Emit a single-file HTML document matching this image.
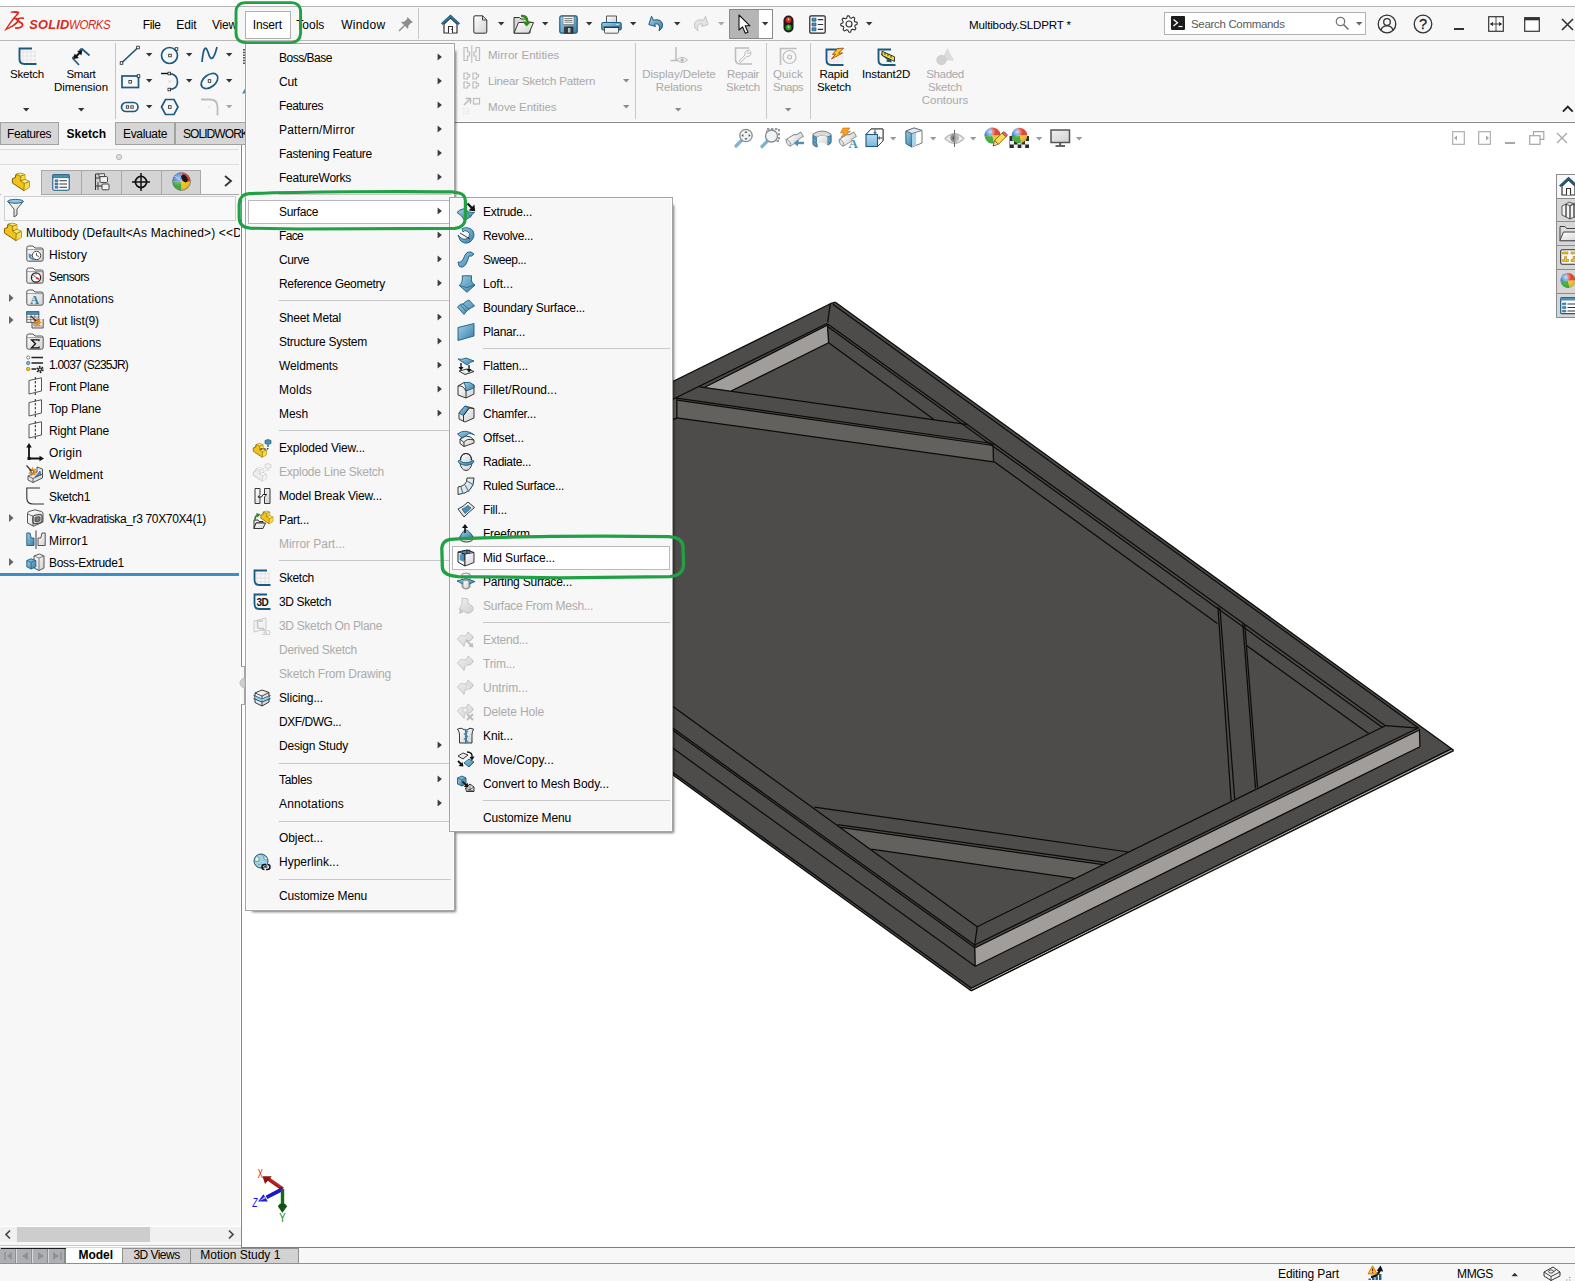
<!DOCTYPE html>
<html><head><meta charset="utf-8"><title>SOLIDWORKS - Multibody.SLDPRT</title>
<style>
html,body{margin:0;padding:0;background:#fff}
body{width:1575px;height:1281px;position:relative;overflow:hidden;font-family:"Liberation Sans",sans-serif;font-size:12px}
.b{position:absolute;display:block}
.t{position:absolute;white-space:nowrap;display:block}
svg{overflow:visible}
svg text{font-family:"Liberation Sans",sans-serif}
</style></head>
<body>
<div class="b" style="left:0px;top:0px;width:1575px;height:1281px;background:#fff;"></div>
<div class="b" style="left:0px;top:6px;width:1575px;height:1px;background:#b4b4b4;"></div>
<div class="b" style="left:0px;top:7px;width:1575px;height:33px;background:#f7f7f7;"></div>
<div class="b" style="left:0px;top:40px;width:1575px;height:1px;background:#b9b9b9;"></div>
<div class="b" style="left:0px;top:41px;width:1575px;height:81px;background:#f7f7f7;"></div>
<div class="b" style="left:0px;top:121px;width:1575px;height:1px;background:#fff;"></div>
<div class="b" style="left:0px;top:122px;width:1575px;height:1px;background:#878787;"></div>
<div class="b" style="left:245px;top:123px;width:1330px;height:1125px;background:#fff;"></div>
<div class="b" style="left:0px;top:1247px;width:1575px;height:1px;background:#7f7f7f;"></div>
<div class="b" style="left:0px;top:1248px;width:1575px;height:15px;background:#f7f7f7;"></div>
<div class="b" style="left:0px;top:1264px;width:1575px;height:17px;background:#f7f7f7;"></div>
<div class="b" style="left:0px;top:145px;width:240px;height:1102px;background:#f7f7f7;"></div>
<div class="b" style="left:240px;top:145px;width:1px;height:1102px;background:#fff;"></div>
<div class="b" style="left:241px;top:145px;width:1px;height:1102px;background:#858585;"></div>
<div class="b" style="left:242px;top:145px;width:3px;height:1102px;background:#fff;"></div>
<div class="b" style="left:241px;top:666px;width:4px;height:39px;background:#f7f7f7;"></div>
<div class="b" style="left:244px;top:666px;width:1px;height:39px;background:#a6a6a6;"></div>
<div class="b" style="left:241px;top:666px;width:4px;height:1px;background:#a6a6a6;"></div>
<div class="b" style="left:241px;top:704px;width:4px;height:1px;background:#a6a6a6;"></div>
<svg class="b" style="left:240px;top:677px;" width="6" height="12" viewBox="0 0 6 12"><path d="M5 1 A5 5 0 0 0 5 11 Z" fill="#cfcfcf" stroke="#aaa" stroke-width="0.6"/></svg>
<svg class="b" style="left:0px;top:0px;" width="30" height="40" viewBox="0 0 30 40"><path d="M10.8 11.4 Q16.5 10.4 19.6 12 Q18.6 15.2 15.2 17.6 Q19.6 18.6 19.4 20.8 Q17.5 25.5 4 30.9 Q9 23.5 12.8 18.2 Q16.4 14.8 16.9 13.3 Q14.5 12.3 10.8 12.8 Z" fill="#da291c"/><path d="M14 19.3 Q10.5 24 7.6 28 Q13.5 25.3 16.6 21.6 Q17.4 19.9 14 19.3 Z" fill="#f7f7f7"/><path d="M24 18.3 Q18.6 17.4 18 19.6 Q17.8 21.4 20.6 22.6 Q23.2 23.8 22.4 25.6 Q21 28.3 15 28" fill="none" stroke="#da291c" stroke-width="1.7"/></svg>
<span class="t" style="left:29.2px;top:16.9px;font-size:12.8px;line-height:16px;font-weight:bold;font-style:italic;color:#da291c;letter-spacing:0.25px;transform-origin:0 100%">SOLID</span>
<span class="t" style="left:68.8px;top:16.9px;font-size:12.8px;line-height:16px;font-style:italic;color:#da291c;letter-spacing:-0.5px;transform:scaleX(0.9);transform-origin:0 100%">WORKS</span>
<span class="t " style="left:142.70px;top:17.24px;font-size:12px;line-height:16px;letter-spacing:-0.334px;color:#000;">File</span>
<span class="t " style="left:176.30px;top:17.24px;font-size:12px;line-height:16px;letter-spacing:-0.169px;color:#000;">Edit</span>
<span class="t " style="left:212.00px;top:17.24px;font-size:12px;line-height:16px;letter-spacing:-0.198px;color:#000;">View</span>
<span class="t " style="left:252.80px;top:17.24px;font-size:12px;line-height:16px;letter-spacing:-0.169px;color:#000;">Insert</span>
<span class="t " style="left:296.30px;top:17.24px;font-size:12px;line-height:16px;letter-spacing:-0.003px;color:#000;">Tools</span>
<span class="t " style="left:341.30px;top:17.24px;font-size:12px;line-height:16px;letter-spacing:0.220px;color:#000;">Window</span>
<div class="b" style="left:418px;top:8px;width:1px;height:31px;background:#c8c8c8;"></div>
<div class="b" style="left:729px;top:9px;width:44px;height:30px;background:#fff;border:1px solid #8a8a8a;box-sizing:border-box;"></div>
<div class="b" style="left:730px;top:10px;width:29px;height:28px;background:#b5b5b5;"></div>
<div class="b" style="left:245px;top:11px;width:46px;height:28px;background:#fff;border:1px solid #b0b0b0;box-sizing:border-box;"></div>
<span class="t " style="left:252.80px;top:17.24px;font-size:12px;line-height:16px;letter-spacing:-0.169px;color:#000;">Insert</span>
<span class="t " style="left:969.00px;top:17.48px;font-size:11.6px;line-height:15.6px;letter-spacing:-0.172px;color:#000;">Multibody.SLDPRT *</span>
<div class="b" style="left:1164px;top:12px;width:202px;height:23px;background:#fff;border:1px solid #b2b2b2;box-sizing:border-box;"></div>
<span class="t " style="left:1191.00px;top:17.47px;font-size:11.5px;line-height:15.5px;letter-spacing:-0.322px;color:#5a5a5a;">Search Commands</span>
<svg class="b" style="left:398px;top:16px;" width="16" height="16" viewBox="0 0 16 16"><path d="M9.5 1 L15 6.5 L13 7 L10.5 9.5 L10 13 L3 6 L6.5 5.5 L9 3 Z" fill="#8d8d8d"/><path d="M6.5 9.5 L1 15" stroke="#8d8d8d" stroke-width="1.4"/></svg>
<svg class="b" style="left:441px;top:15.2px;" width="19" height="19" viewBox="0 0 19 19"><path d="M3 9 V18 H16 V9 L9.5 3 Z" fill="#fff" stroke="#333" stroke-width="1.2"/><path d="M7.5 18 V11.5 H11.5 V18" fill="#fff" stroke="#333" stroke-width="1.1"/><path d="M10.3 14.5 h0.9" stroke="#333" stroke-width="1"/><path d="M0.8 9.2 L9.5 1.2 L18.2 9.2" fill="none" stroke="#1b5a80" stroke-width="2.4" stroke-linejoin="miter"/><path d="M1.5 8.6 L9.5 1.4 L17.5 8.6" fill="none" stroke="#4a8fb6" stroke-width="0.8"/></svg>
<svg class="b" style="left:473px;top:14.6px;" width="15" height="19" viewBox="0 0 15 19"><path d="M2 0.8 H9.5 L13.8 5 V17 Q13.8 18.2 12.5 18.2 H2 Q0.8 18.2 0.8 17 V2 Q0.8 0.8 2 0.8 Z" fill="url(#gw)" stroke="#333" stroke-width="1" stroke-linejoin="round"/><path d="M9.5 0.8 V5 H13.8" fill="none" stroke="#333" stroke-width="0.9"/></svg>
<svg class="b" style="left:498.3px;top:21.900000000000002px;" width="6.4" height="3.6" viewBox="0 0 6.4 3.6"><path d="M0 0 H6.4 L3.2 3.5 Z" fill="#333"/></svg>
<svg class="b" style="left:513px;top:14.6px;" width="22" height="19" viewBox="0 0 22 19"><path d="M1 2.5 H6.5 L8 4 H14.5 V7 H17 V18 H1 Z" fill="#d8d8d8" stroke="#333" stroke-width="1"/><path d="M5.5 7.5 H20.5 L16 18.2 H1 Z" fill="url(#gw)" stroke="#333" stroke-width="1" stroke-linejoin="round"/><path d="M8 1 Q14 0.5 14.2 6" fill="none" stroke="#2e8a12" stroke-width="2.6"/><path d="M9.5 6.5 H18.5 L13.5 11.5 Z" fill="#2e8a12"/></svg>
<svg class="b" style="left:542.3px;top:21.900000000000002px;" width="6.4" height="3.6" viewBox="0 0 6.4 3.6"><path d="M0 0 H6.4 L3.2 3.5 Z" fill="#333"/></svg>
<svg class="b" style="left:559px;top:14.6px;" width="19" height="19" viewBox="0 0 19 19"><rect x="0.8" y="0.8" width="17.4" height="17.4" rx="1.8" fill="url(#gb)" stroke="#1b5a80" stroke-width="1.2"/><rect x="4" y="1.5" width="11" height="8" fill="#f4f4f4" stroke="#666" stroke-width="0.6"/><path d="M5.5 3.6 H13.5 M5.5 5.4 H13.5 M5.5 7.2 H13.5" stroke="#666" stroke-width="0.8"/><rect x="5.5" y="12" width="8.5" height="6.2" fill="#3a3a3a" stroke="#222" stroke-width="0.6"/><rect x="9" y="13" width="2.4" height="4.5" fill="#bdbdbd"/></svg>
<svg class="b" style="left:586.3px;top:21.900000000000002px;" width="6.4" height="3.6" viewBox="0 0 6.4 3.6"><path d="M0 0 H6.4 L3.2 3.5 Z" fill="#333"/></svg>
<svg class="b" style="left:601px;top:14.6px;" width="21" height="19" viewBox="0 0 21 19"><path d="M5.5 8 V1 H15.5 V8" fill="url(#gw)" stroke="#444" stroke-width="0.9"/><rect x="0.8" y="7.5" width="19.4" height="7.5" rx="1.5" fill="url(#gb)" stroke="#1b5a80" stroke-width="1.1"/><path d="M3.5 12.5 H17.5 V17 Q17.5 18.2 16.5 18.2 H4.5 Q3.5 18.2 3.5 17 Z" fill="#f4f4f4" stroke="#444" stroke-width="0.9"/><path d="M2.5 12.2 H18.5" stroke="#123f5c" stroke-width="1.4"/><path d="M15.5 9.5 h2" stroke="#dff" stroke-width="1"/></svg>
<svg class="b" style="left:630.3px;top:21.900000000000002px;" width="6.4" height="3.6" viewBox="0 0 6.4 3.6"><path d="M0 0 H6.4 L3.2 3.5 Z" fill="#333"/></svg>
<svg class="b" style="left:648px;top:15px;" width="17" height="17" viewBox="0 0 17 17"><path d="M5.5 5.2 Q13 3.5 14.5 9 Q15.3 13 11 16 Q12.3 12.5 11 10.3 Q9.5 8 6.5 9 L7.5 11.5 L0.8 9.5 L3.5 1.2 Z" fill="url(#gb)" stroke="#1b5a80" stroke-width="1" stroke-linejoin="round"/></svg>
<svg class="b" style="left:674.3px;top:21.900000000000002px;" width="6.4" height="3.6" viewBox="0 0 6.4 3.6"><path d="M0 0 H6.4 L3.2 3.5 Z" fill="#333"/></svg>
<svg class="b" style="left:692px;top:15px;" width="17" height="17" viewBox="0 0 17 17"><path d="M11.5 5.2 Q4 3.5 2.5 9 Q1.7 13 6 16 Q4.7 12.5 6 10.3 Q7.5 8 10.5 9 L9.5 11.5 L16.2 9.5 L13.5 1.2 Z" fill="#e4e4e4" stroke="#c6c6c6" stroke-width="1" stroke-linejoin="round"/></svg>
<svg class="b" style="left:717.8px;top:21.900000000000002px;" width="6.4" height="3.6" viewBox="0 0 6.4 3.6"><path d="M0 0 H6.4 L3.2 3.5 Z" fill="#a8a8a8"/></svg>
<svg class="b" style="left:738px;top:14px;" width="14" height="21" viewBox="0 0 14 21"><path d="M1 1 V16 L4.5 12.8 L7.3 19.3 L10 18.2 L7.2 11.8 H12 Z" fill="#fff" stroke="#111" stroke-width="1.1" stroke-linejoin="round"/></svg>
<svg class="b" style="left:762.3px;top:21.900000000000002px;" width="6.4" height="3.6" viewBox="0 0 6.4 3.6"><path d="M0 0 H6.4 L3.2 3.5 Z" fill="#333"/></svg>
<svg class="b" style="left:783px;top:15px;" width="11" height="18" viewBox="0 0 11 18"><rect x="0.5" y="0.5" width="10" height="17" rx="5" fill="#1c1c1c"/><circle cx="5.5" cy="5" r="3" fill="#d8261c"/><circle cx="5.5" cy="12.6" r="3" fill="#2c9a23"/><path d="M5.5 3 V5.6 M4.4 4.2 H6.6" stroke="#f8b0a8" stroke-width="0.9"/><path d="M5.5 10.6 V13.2 M4.4 11.8 H6.6" stroke="#a8e89f" stroke-width="0.9"/></svg>
<svg class="b" style="left:809px;top:14.6px;" width="18" height="19" viewBox="0 0 18 19"><rect x="0.8" y="0.8" width="15.4" height="17.4" rx="1.2" fill="#fbfbfb" stroke="#222" stroke-width="1.2"/><path d="M3 3.2 h4 v3 h-4z M3 8 h4 v3 h-4z M3 12.8 h4 v3 h-4z" fill="#4a8fb6" stroke="#1b5a80" stroke-width="0.7"/><path d="M8.8 4.7 H14.2 M8.8 9.5 H14.2 M8.8 14.3 H14.2" stroke="#333" stroke-width="1.2"/></svg>
<svg class="b" style="left:839.5px;top:14.5px;" width="18" height="18" viewBox="0 0 18 18"><polygon points="17.14,7.38 17.30,9.00 15.08,10.21 14.73,11.37 15.90,13.61 14.87,14.87 12.44,14.16 11.37,14.73 10.62,17.14 9.00,17.30 7.79,15.08 6.63,14.73 4.39,15.90 3.13,14.87 3.84,12.44 3.27,11.37 0.86,10.62 0.70,9.00 2.92,7.79 3.27,6.63 2.10,4.39 3.13,3.13 5.56,3.84 6.63,3.27 7.38,0.86 9.00,0.70 10.21,2.92 11.37,3.27 13.61,2.10 14.87,3.13 14.16,5.56 14.73,6.63" fill="#fcfcfc" stroke="#333" stroke-width="1.1" stroke-linejoin="round"/><circle cx="9" cy="9" r="3" fill="#f7f7f7" stroke="#333" stroke-width="1.2"/></svg>
<svg class="b" style="left:865.8px;top:21.900000000000002px;" width="6.4" height="3.6" viewBox="0 0 6.4 3.6"><path d="M0 0 H6.4 L3.2 3.5 Z" fill="#333"/></svg>
<svg class="b" style="left:1171px;top:16px;" width="14" height="14" viewBox="0 0 14 14"><rect width="14" height="14" rx="1" fill="#1b1b1b"/><path d="M2.5 3.5 L6.5 6.8 L2.5 10" fill="none" stroke="#fff" stroke-width="1.3"/><path d="M7.5 10.5 H11.5" stroke="#fff" stroke-width="1.2"/></svg>
<svg class="b" style="left:1335px;top:16px;" width="15" height="15" viewBox="0 0 15 15"><circle cx="5.5" cy="5.5" r="4.2" fill="none" stroke="#777" stroke-width="1.3"/><path d="M8.6 8.6 L13.5 13.5" stroke="#777" stroke-width="1.7"/></svg>
<svg class="b" style="left:1355.8px;top:21.6px;" width="6.4" height="3.6" viewBox="0 0 6.4 3.6"><path d="M0 0 H6.4 L3.2 3.5 Z" fill="#666"/></svg>
<svg class="b" style="left:1377px;top:14px;" width="20" height="20" viewBox="0 0 20 20"><circle cx="10" cy="10" r="8.8" fill="none" stroke="#333" stroke-width="1.3"/><circle cx="10" cy="8" r="3.3" fill="none" stroke="#333" stroke-width="1.3"/><path d="M4 16.2 Q5 11.8 10 11.8 Q15 11.8 16 16.2" fill="none" stroke="#333" stroke-width="1.3"/></svg>
<svg class="b" style="left:1413px;top:14px;" width="20" height="20" viewBox="0 0 20 20"><circle cx="10" cy="10" r="8.8" fill="none" stroke="#333" stroke-width="1.3"/><text x="10" y="15" text-anchor="middle" font-size="14.5" fill="#222" stroke="#222" stroke-width="0.3">?</text></svg>
<div class="b" style="left:1454px;top:28px;width:10px;height:2px;background:#333;"></div>
<svg class="b" style="left:1488px;top:16px;" width="16" height="16" viewBox="0 0 16 16"><rect x="0.7" y="0.7" width="14.6" height="14.6" fill="#fdfdfd" stroke="#333" stroke-width="1.2"/><path d="M8 1 V15" stroke="#333" stroke-width="0.9"/><path d="M2.5 8 H13.5" stroke="#333" stroke-width="1"/><path d="M2 8 L5 5.8 V10.2 Z M14 8 L11 5.8 V10.2 Z" fill="#333"/></svg>
<svg class="b" style="left:1524px;top:17px;" width="16" height="15" viewBox="0 0 16 15"><rect x="0.7" y="0.7" width="14.6" height="13.6" fill="#fdfdfd" stroke="#333" stroke-width="1.2"/><rect x="0.7" y="0.7" width="14.6" height="2.6" fill="#333"/></svg>
<svg class="b" style="left:1561px;top:18px;" width="14" height="13" viewBox="0 0 14 13"><path d="M1 1 L12 12 M12 1 L1 12" stroke="#333" stroke-width="1.6"/></svg>
<div class="b" style="left:115px;top:43px;width:1px;height:76px;background:#c4c4c4;"></div>
<span class="t " style="left:10.11px;top:66.67px;font-size:11.5px;line-height:15.5px;letter-spacing:-0.230px;color:#000;">Sketch</span>
<span class="t " style="left:66.53px;top:66.67px;font-size:11.5px;line-height:15.5px;letter-spacing:-0.344px;color:#000;">Smart</span>
<span class="t " style="left:53.98px;top:79.67px;font-size:11.5px;line-height:15.5px;letter-spacing:-0.032px;color:#000;">Dimension</span>
<span class="t " style="left:488.00px;top:48.37px;font-size:11.5px;line-height:15.5px;letter-spacing:0.032px;color:#a9a9a9;">Mirror Entities</span>
<span class="t " style="left:488.00px;top:74.37px;font-size:11.5px;line-height:15.5px;letter-spacing:-0.166px;color:#a9a9a9;">Linear Sketch Pattern</span>
<span class="t " style="left:488.00px;top:100.37px;font-size:11.5px;line-height:15.5px;letter-spacing:-0.039px;color:#a9a9a9;">Move Entities</span>
<div class="b" style="left:635px;top:43px;width:1px;height:76px;background:#c8c8c8;"></div>
<span class="t " style="left:642.33px;top:66.67px;font-size:11.5px;line-height:15.5px;letter-spacing:-0.057px;color:#a9a9a9;">Display/Delete</span>
<span class="t " style="left:655.84px;top:79.67px;font-size:11.5px;line-height:15.5px;letter-spacing:-0.180px;color:#a9a9a9;">Relations</span>
<span class="t " style="left:727.08px;top:66.67px;font-size:11.5px;line-height:15.5px;letter-spacing:-0.339px;color:#a9a9a9;">Repair</span>
<span class="t " style="left:726.11px;top:79.67px;font-size:11.5px;line-height:15.5px;letter-spacing:-0.230px;color:#a9a9a9;">Sketch</span>
<div class="b" style="left:766px;top:43px;width:1px;height:76px;background:#c8c8c8;"></div>
<span class="t " style="left:773.04px;top:66.67px;font-size:11.5px;line-height:15.5px;letter-spacing:0.104px;color:#a9a9a9;">Quick</span>
<span class="t " style="left:773.04px;top:79.67px;font-size:11.5px;line-height:15.5px;letter-spacing:-0.539px;color:#a9a9a9;">Snaps</span>
<div class="b" style="left:810px;top:43px;width:1px;height:76px;background:#c8c8c8;"></div>
<span class="t " style="left:819.52px;top:66.67px;font-size:11.5px;line-height:15.5px;letter-spacing:-0.219px;color:#000;">Rapid</span>
<span class="t " style="left:817.11px;top:79.67px;font-size:11.5px;line-height:15.5px;letter-spacing:-0.230px;color:#000;">Sketch</span>
<span class="t " style="left:861.88px;top:66.67px;font-size:11.5px;line-height:15.5px;letter-spacing:-0.108px;color:#000;">Instant2D</span>
<span class="t " style="left:926.18px;top:66.67px;font-size:11.5px;line-height:15.5px;letter-spacing:-0.336px;color:#a9a9a9;">Shaded</span>
<span class="t " style="left:928.11px;top:79.67px;font-size:11.5px;line-height:15.5px;letter-spacing:-0.230px;color:#a9a9a9;">Sketch</span>
<span class="t " style="left:921.84px;top:92.67px;font-size:11.5px;line-height:15.5px;letter-spacing:-0.043px;color:#a9a9a9;">Contours</span>
<svg class="b" style="left:18px;top:47px;" width="19" height="19" viewBox="0 0 19 19"><path d="M5 3 V17 M9 3 V17 M13 3 V17 M17 3 V17 M3 5 H18 M3 9 H18 M3 13 H18" stroke="#e2e2e2" stroke-width="0.8" fill="none"/><path d="M14 1.5 H1.5 V12 Q1.5 17 6.5 17 H18.5" fill="none" stroke="#1b5a80" stroke-width="1.9"/></svg>
<svg class="b" style="left:71px;top:47px;" width="20" height="19" viewBox="0 0 20 19"><path d="M10.5 1.5 L18.5 8.5" fill="none" stroke="#1b5a80" stroke-width="1.7"/><path d="M1.5 11 L8 18" fill="none" stroke="#1b5a80" stroke-width="1.7"/><path d="M10.5 1.5 L8.5 3.5 M1.5 11 L4 8.5" fill="none" stroke="#1b5a80" stroke-width="1.7"/><path d="M5 9.5 L9 5.5" stroke="#111" stroke-width="2"/><path d="M2.6 11.9 L3.6 6.6 L7.9 10.9 Z M11.4 3.1 L10.4 8.4 L6.1 4.1 Z" fill="#111"/></svg>
<svg class="b" style="left:23.3px;top:107.6px;" width="6.4" height="3.6" viewBox="0 0 6.4 3.6"><path d="M0 0 H6.4 L3.2 3.5 Z" fill="#333"/></svg>
<svg class="b" style="left:78.3px;top:107.6px;" width="6.4" height="3.6" viewBox="0 0 6.4 3.6"><path d="M0 0 H6.4 L3.2 3.5 Z" fill="#333"/></svg>
<svg class="b" style="left:119px;top:45px;" width="21" height="21" viewBox="0 0 21 21"><path d="M2.5 18 L19 2.5" fill="none" stroke="#1b5a80" stroke-width="1.7"/><rect x="1.2" y="16.7" width="2.6" height="2.6" fill="#fff" stroke="#222" stroke-width="0.8"/><rect x="17.7" y="1.2" width="2.6" height="2.6" fill="#fff" stroke="#222" stroke-width="0.8"/></svg>
<svg class="b" style="left:146.3px;top:52.8px;" width="6.4" height="3.6" viewBox="0 0 6.4 3.6"><path d="M0 0 H6.4 L3.2 3.5 Z" fill="#333"/></svg>
<svg class="b" style="left:160px;top:45px;" width="20" height="20" viewBox="0 0 20 20"><circle cx="9.5" cy="10.5" r="8" fill="none" stroke="#1b5a80" stroke-width="1.7"/><rect x="8.7" y="9.2" width="2.6" height="2.6" fill="#fff" stroke="#222" stroke-width="0.8"/><rect x="15.2" y="2.7" width="2.6" height="2.6" fill="#fff" stroke="#222" stroke-width="0.8"/></svg>
<svg class="b" style="left:186.3px;top:52.8px;" width="6.4" height="3.6" viewBox="0 0 6.4 3.6"><path d="M0 0 H6.4 L3.2 3.5 Z" fill="#333"/></svg>
<svg class="b" style="left:200px;top:45px;" width="20" height="19" viewBox="0 0 20 19"><path d="M2 17 Q4 -4 8 7 Q12 22 17 2" fill="none" stroke="#1b5a80" stroke-width="1.7" stroke-width="2"/></svg>
<svg class="b" style="left:226.3px;top:52.8px;" width="6.4" height="3.6" viewBox="0 0 6.4 3.6"><path d="M0 0 H6.4 L3.2 3.5 Z" fill="#333"/></svg>
<svg class="b" style="left:120px;top:72px;" width="21" height="17" viewBox="0 0 21 17"><rect x="2" y="4" width="16.5" height="11.5" fill="none" stroke="#1b5a80" stroke-width="1.7"/><rect x="8.899999999999999" y="8.5" width="2.6" height="2.6" fill="#fff" stroke="#222" stroke-width="0.8"/><rect x="17.2" y="2.7" width="2.6" height="2.6" fill="#fff" stroke="#222" stroke-width="0.8"/></svg>
<svg class="b" style="left:146.3px;top:78.8px;" width="6.4" height="3.6" viewBox="0 0 6.4 3.6"><path d="M0 0 H6.4 L3.2 3.5 Z" fill="#333"/></svg>
<svg class="b" style="left:159px;top:71px;" width="21" height="20" viewBox="0 0 21 20"><path d="M10 2.5 Q18.5 3 18.5 11 Q18.5 18 10.5 18.5" fill="none" stroke="#1b5a80" stroke-width="1.7"/><path d="M2 2.5 H9" stroke="#111" stroke-width="1.4"/><rect x="9.0" y="1.2" width="2.6" height="2.6" fill="#fff" stroke="#222" stroke-width="0.8"/><rect x="9.0" y="17.2" width="2.6" height="2.6" fill="#fff" stroke="#222" stroke-width="0.8"/><path d="M9 9 L12 12 M12 9 L9 12" stroke="#ccc" stroke-width="0.7"/></svg>
<svg class="b" style="left:186.3px;top:78.8px;" width="6.4" height="3.6" viewBox="0 0 6.4 3.6"><path d="M0 0 H6.4 L3.2 3.5 Z" fill="#333"/></svg>
<svg class="b" style="left:199px;top:71px;" width="21" height="20" viewBox="0 0 21 20"><ellipse cx="10.5" cy="10" rx="9.5" ry="6" transform="rotate(-38 10.5 10)" fill="none" stroke="#1b5a80" stroke-width="1.7"/><rect x="9.2" y="8.7" width="2.6" height="2.6" fill="#fff" stroke="#222" stroke-width="0.8"/></svg>
<svg class="b" style="left:226.3px;top:78.8px;" width="6.4" height="3.6" viewBox="0 0 6.4 3.6"><path d="M0 0 H6.4 L3.2 3.5 Z" fill="#333"/></svg>
<svg class="b" style="left:120px;top:100px;" width="20" height="14" viewBox="0 0 20 14"><rect x="1.5" y="2.5" width="16.5" height="9" rx="4.5" fill="none" stroke="#1b5a80" stroke-width="1.7"/><rect x="6.3" y="5.8" width="2.4" height="2.4" fill="#fff" stroke="#222" stroke-width="0.8"/><rect x="10.8" y="5.8" width="2.4" height="2.4" fill="#fff" stroke="#222" stroke-width="0.8"/></svg>
<svg class="b" style="left:146.3px;top:104.8px;" width="6.4" height="3.6" viewBox="0 0 6.4 3.6"><path d="M0 0 H6.4 L3.2 3.5 Z" fill="#333"/></svg>
<svg class="b" style="left:160px;top:98px;" width="20" height="18" viewBox="0 0 20 18"><path d="M1.5 9 L5.5 1.5 H14 L18 9 L14 16.5 H5.5 Z" fill="none" stroke="#1b5a80" stroke-width="1.7"/><rect x="8.5" y="7.7" width="2.6" height="2.6" fill="#fff" stroke="#222" stroke-width="0.8"/></svg>
<svg class="b" style="left:200px;top:98px;" width="20" height="18" viewBox="0 0 20 18"><path d="M1 1.5 H10 Q17.5 1.5 17.5 9 V17.5" fill="none" stroke="#bdbdbd" stroke-width="1.8"/><path d="M8 8 L10.5 10.5 M10.5 8 L8 10.5" stroke="#ddd" stroke-width="0.7"/></svg>
<svg class="b" style="left:226.3px;top:104.8px;" width="6.4" height="3.6" viewBox="0 0 6.4 3.6"><path d="M0 0 H6.4 L3.2 3.5 Z" fill="#a8a8a8"/></svg>
<svg class="b" style="left:243px;top:49px;" width="2" height="15" viewBox="0 0 2 15"><path d="M1 0 V15" stroke="#333" stroke-width="1.6" stroke-dasharray="1.5 1.2"/></svg>
<svg class="b" style="left:241.5px;top:87px;" width="4" height="7" viewBox="0 0 4 7"><path d="M0 6.5 L4 0 V6.5 Z" fill="#4a8fb6"/></svg>
<svg class="b" style="left:463px;top:45px;" width="18" height="18" viewBox="0 0 18 18"><path d="M8.8 0 V18" stroke="#bdbdbd" stroke-width="1"/><path d="M1 2.5 H4.5 V7 H6.5 V11 H4.5 V15.5 H1 Z M16.5 2.5 H13 V7 H11 V11 H13 V15.5 H16.5 Z" fill="none" stroke="#bdbdbd" stroke-width="1.2"/></svg>
<svg class="b" style="left:463px;top:72px;" width="18" height="17" viewBox="0 0 18 17"><path d="M1 1 H4.5 V2.5 H6.5 V5 H4.5 V7 H1 Z M10 1 H13.5 V2.5 H15.5 V5 H13.5 V7 H10 Z M1 10 H4.5 V11.5 H6.5 V14 H4.5 V16 H1 Z M10 10 H13.5 V11.5 H15.5 V14 H13.5 V16 H10 Z" fill="none" stroke="#bdbdbd" stroke-width="1.2"/></svg>
<svg class="b" style="left:462px;top:97px;" width="19" height="18" viewBox="0 0 19 18"><path d="M2 8 L8 2" stroke="#bdbdbd" stroke-width="1.6"/><path d="M3.5 1.5 H8.5 V6.5" fill="none" stroke="#bdbdbd" stroke-width="1.6"/><rect x="11.5" y="1.5" width="6" height="5.5" fill="none" stroke="#bdbdbd" stroke-width="1.2" stroke-width="1.5"/><path d="M1 11.5 H8 M1 14 H8 M1 16.5 H8" stroke="#e0e0e0" stroke-width="1.2" stroke-dasharray="1.2 1.2"/></svg>
<svg class="b" style="left:623.3px;top:78.8px;" width="6.4" height="3.6" viewBox="0 0 6.4 3.6"><path d="M0 0 H6.4 L3.2 3.5 Z" fill="#8a8a8a"/></svg>
<svg class="b" style="left:623.3px;top:104.8px;" width="6.4" height="3.6" viewBox="0 0 6.4 3.6"><path d="M0 0 H6.4 L3.2 3.5 Z" fill="#8a8a8a"/></svg>
<svg class="b" style="left:669px;top:46px;" width="22" height="20" viewBox="0 0 22 20"><path d="M7 1 V14 M1.5 14.5 H13" stroke="#bdbdbd" stroke-width="1.5"/><path d="M8 14 Q13 8.5 18.5 14 Q13 19 8 14Z" fill="#f2f2f2" stroke="#bdbdbd" stroke-width="1"/><circle cx="13.2" cy="14" r="1.8" fill="#bdbdbd"/></svg>
<svg class="b" style="left:675.3px;top:107.6px;" width="6.4" height="3.6" viewBox="0 0 6.4 3.6"><path d="M0 0 H6.4 L3.2 3.5 Z" fill="#8a8a8a"/></svg>
<svg class="b" style="left:734px;top:47px;" width="19" height="19" viewBox="0 0 19 19"><path d="M15 1 H1.5 V12 Q1.5 17 6.5 17 H18" fill="none" stroke="#bdbdbd" stroke-width="1.6"/><path d="M5 14 L11 8 Q10 5 12.5 3.5 Q14 2.8 15.5 3.2 L13.2 5.5 L14.5 7 L16.8 4.7 Q17.5 7.5 15.5 9 Q14 10 12.5 9.5 L6.8 15.5 Z" fill="#f4f4f4" stroke="#bdbdbd" stroke-width="1"/></svg>
<svg class="b" style="left:779px;top:47px;" width="19" height="19" viewBox="0 0 19 19"><path d="M1.5 18 V1.5 H17.5" fill="none" stroke="#bdbdbd" stroke-width="1.5"/><circle cx="10.5" cy="10" r="6.5" fill="none" stroke="#bdbdbd" stroke-width="1.2"/><circle cx="10.5" cy="10" r="2" fill="none" stroke="#bdbdbd" stroke-width="1.2"/></svg>
<svg class="b" style="left:785.3px;top:107.6px;" width="6.4" height="3.6" viewBox="0 0 6.4 3.6"><path d="M0 0 H6.4 L3.2 3.5 Z" fill="#8a8a8a"/></svg>
<svg class="b" style="left:824.5px;top:47.5px;" width="19" height="19" viewBox="0 0 19 19"><path d="M5 3 V17 M9 3 V17 M13 3 V17 M17 3 V17 M3 5 H18 M3 9 H18 M3 13 H18" stroke="#e2e2e2" stroke-width="0.8" fill="none"/><path d="M14 1.5 H1.5 V12 Q1.5 17 6.5 17 H18.5" fill="none" stroke="#1b5a80" stroke-width="1.9"/><path d="M12.5 0.5 L18.5 0.2 L13.5 5.2 L17.5 5 L6.5 11 L10.5 6.2 L7.5 6.4 Z" fill="#f8c81c" stroke="#b0410a" stroke-width="0.9" stroke-linejoin="round"/></svg>
<svg class="b" style="left:877px;top:47.5px;" width="19" height="19" viewBox="0 0 19 19"><path d="M14 1.5 H1.5 V12 Q1.5 17 6.5 17 H18.5" fill="none" stroke="#1b5a80" stroke-width="1.9"/><path d="M4.5 5.5 L12 12" stroke="#1b5a80" stroke-width="2.2"/><path d="M14.8 14.6 L8.8 13.6 L13.2 9 Z" fill="#1b5a80"/><path d="M5 3.2 L17.5 8.8 V13.4 L5 7.4 Z" fill="#f7dc3c" stroke="#222" stroke-width="0.9"/><path d="M8 4.6 V7 M11 6 V8.2 M14 7.3 V9.8" stroke="#222" stroke-width="0.9"/></svg>
<svg class="b" style="left:936px;top:47px;" width="19" height="19" viewBox="0 0 19 19"><path d="M11.5 1 L18 13.5 H5 Z" fill="#dcdcdc"/><circle cx="5.5" cy="13" r="4.8" fill="#d2d2d2" stroke="#c6c6c6" stroke-width="0.6"/></svg>
<svg class="b" style="left:1561px;top:105px;" width="13" height="8" viewBox="0 0 13 8"><path d="M1.9 6.6 L6.8 1.6 L11.7 6.6" fill="none" stroke="#222" stroke-width="1.9"/></svg>
<div class="b" style="left:0px;top:123px;width:245px;height:22px;background:#d6d6d6;"></div>
<div class="b" style="left:0px;top:144px;width:245px;height:1px;background:#8e8e8e;"></div>
<div class="b" style="left:0px;top:122px;width:59px;height:23px;background:#d6d6d6;border:1px solid #a2a2a2;box-sizing:border-box;"></div>
<div class="b" style="left:115px;top:122px;width:60px;height:23px;background:#d6d6d6;border:1px solid #a2a2a2;box-sizing:border-box;"></div>
<div class="b" style="left:175px;top:122px;width:72px;height:23px;background:#d6d6d6;border:1px solid #a2a2a2;box-sizing:border-box;"></div>
<div class="b" style="left:59px;top:122px;width:56px;height:24px;background:#f7f7f7;"></div>
<span class="t " style="left:7.00px;top:125.94px;font-size:12px;line-height:16px;letter-spacing:-0.419px;color:#000;">Features</span>
<span class="t " style="left:66.50px;top:125.94px;font-size:12px;line-height:16px;letter-spacing:0.025px;color:#000;font-weight:bold;">Sketch</span>
<span class="t " style="left:123.00px;top:125.94px;font-size:12px;line-height:16px;letter-spacing:-0.337px;color:#000;">Evaluate</span>
<span class="t " style="left:183.00px;top:125.94px;font-size:12px;line-height:16px;letter-spacing:-0.935px;color:#000;width:62px;overflow:hidden;">SOLIDWORKS</span>
<div class="b" style="left:0px;top:149px;width:239px;height:1px;background:#dcdcdc;"></div>
<div class="b" style="left:0px;top:164px;width:239px;height:1px;background:#dcdcdc;"></div>
<svg class="b" style="left:115px;top:153px;" width="8" height="8" viewBox="0 0 8 8"><circle cx="4" cy="4" r="2.6" fill="#ddd" stroke="#aaa" stroke-width="0.8"/></svg>
<div class="b" style="left:41px;top:170px;width:160px;height:25px;background:#d4d4d4;"></div>
<div class="b" style="left:41px;top:170px;width:1px;height:25px;background:#a8a8a8;"></div>
<div class="b" style="left:81px;top:170px;width:1px;height:25px;background:#a8a8a8;"></div>
<div class="b" style="left:121px;top:170px;width:1px;height:25px;background:#a8a8a8;"></div>
<div class="b" style="left:161px;top:170px;width:1px;height:25px;background:#a8a8a8;"></div>
<div class="b" style="left:200px;top:170px;width:1px;height:25px;background:#a8a8a8;"></div>
<div class="b" style="left:41px;top:170px;width:160px;height:1px;background:#a8a8a8;"></div>
<div class="b" style="left:0px;top:194px;width:239px;height:1px;background:#a8a8a8;"></div>
<div class="b" style="left:1px;top:170px;width:40px;height:25px;background:#f7f7f7;"></div>
<div class="b" style="left:4px;top:196px;width:232px;height:25px;background:#f9f9f9;border:1px solid #cfcfcf;box-sizing:border-box;"></div>
<svg class="b" style="left:222px;top:173px;" width="12" height="16" viewBox="0 0 12 16"><path d="M3 3 L9 8 L3 13" fill="none" stroke="#333" stroke-width="1.8"/></svg>
<span class="t " style="left:26.00px;top:225.14px;font-size:12px;line-height:16px;letter-spacing:0.164px;color:#000;width:214px;overflow:hidden;">Multibody (Default&lt;As Machined&gt;) &lt;&lt;D</span>
<span class="t " style="left:49.00px;top:247.14px;font-size:12px;line-height:16px;letter-spacing:0.095px;color:#000;">History</span>
<span class="t " style="left:49.00px;top:269.14px;font-size:12px;line-height:16px;letter-spacing:-0.575px;color:#000;">Sensors</span>
<span class="t " style="left:49.00px;top:291.14px;font-size:12px;line-height:16px;letter-spacing:0.147px;color:#000;">Annotations</span>
<span class="t " style="left:49.00px;top:313.14px;font-size:12px;line-height:16px;letter-spacing:-0.122px;color:#000;">Cut list(9)</span>
<span class="t " style="left:49.00px;top:335.14px;font-size:12px;line-height:16px;letter-spacing:-0.153px;color:#000;">Equations</span>
<span class="t " style="left:49.00px;top:357.14px;font-size:12px;line-height:16px;letter-spacing:-0.781px;color:#000;">1.0037 (S235JR)</span>
<span class="t " style="left:49.00px;top:379.14px;font-size:12px;line-height:16px;letter-spacing:-0.185px;color:#000;">Front Plane</span>
<span class="t " style="left:49.00px;top:401.14px;font-size:12px;line-height:16px;letter-spacing:-0.153px;color:#000;">Top Plane</span>
<span class="t " style="left:49.00px;top:423.14px;font-size:12px;line-height:16px;letter-spacing:-0.185px;color:#000;">Right Plane</span>
<span class="t " style="left:49.00px;top:445.14px;font-size:12px;line-height:16px;letter-spacing:0.165px;color:#000;">Origin</span>
<span class="t " style="left:49.00px;top:467.14px;font-size:12px;line-height:16px;letter-spacing:0.025px;color:#000;">Weldment</span>
<span class="t " style="left:49.00px;top:489.14px;font-size:12px;line-height:16px;letter-spacing:-0.337px;color:#000;">Sketch1</span>
<span class="t " style="left:49.00px;top:511.14px;font-size:12px;line-height:16px;letter-spacing:-0.359px;color:#000;">Vkr-kvadratiska_r3 70X70X4(1)</span>
<span class="t " style="left:49.00px;top:533.14px;font-size:12px;line-height:16px;letter-spacing:0.143px;color:#000;">Mirror1</span>
<span class="t " style="left:49.00px;top:555.14px;font-size:12px;line-height:16px;letter-spacing:-0.285px;color:#000;">Boss-Extrude1</span>
<svg class="b" style="left:7px;top:293px;" width="8" height="10" viewBox="0 0 8 10"><path d="M2 1 L6.5 5 L2 9 Z" fill="#666"/></svg>
<svg class="b" style="left:7px;top:315px;" width="8" height="10" viewBox="0 0 8 10"><path d="M2 1 L6.5 5 L2 9 Z" fill="#666"/></svg>
<svg class="b" style="left:7px;top:513px;" width="8" height="10" viewBox="0 0 8 10"><path d="M2 1 L6.5 5 L2 9 Z" fill="#666"/></svg>
<svg class="b" style="left:7px;top:557px;" width="8" height="10" viewBox="0 0 8 10"><path d="M2 1 L6.5 5 L2 9 Z" fill="#666"/></svg>
<div class="b" style="left:0px;top:573px;width:239px;height:3px;background:#3b8fc6;"></div>
<svg class="b" style="left:4px;top:223px;" width="18" height="18" viewBox="0 0 18 18"><g transform="translate(0,0) scale(1.0)"><path d="M4.1 1.3 L8.4 0.2 L12.8 1.6 V6.3 L17.2 8.4 V14.4 L11.8 17.6 L0.4 10 V5.6 L3.2 4.7 Z" fill="#f1c31a" stroke="#7d5e08" stroke-width="1" stroke-linejoin="round"/><path d="M4.1 1.3 L8.4 0.2 L12.8 1.6 L8.6 3.2 Z M8.6 8 L12.8 6.3 L17.2 8.4 L12.3 10.6 Z" fill="#fde670"/><path d="M8.6 3.2 L12.8 1.6 V6.3 L8.6 8 Z M12.3 10.6 L17.2 8.4 V14.4 L11.8 17.6 Z" fill="#f9dc48"/><path d="M4.1 1.3 L8.6 3.2 L12.8 1.6 M8.6 3.2 V8 L12.8 6.3 M8.6 8 L12.3 10.6 L17.2 8.4 M12.3 10.6 L11.8 17.6 M3.2 4.7 L4.1 1.3" fill="none" stroke="#7d5e08" stroke-width="0.7"/></g></svg>
<svg class="b" style="left:26px;top:245px;" width="19" height="18" viewBox="0 0 19 18"><path d="M0.8 3 Q0.8 1 2.8 1 H7 L9 3 H15.5 Q17.2 3 17.2 4.8 V14.5 Q17.2 16.2 15.5 16.2 H2.5 Q0.8 16.2 0.8 14.5 Z" fill="url(#gw)" stroke="#444" stroke-width="0.9" stroke-linejoin="round"/><path d="M1 4.6 H17" stroke="#777" stroke-width="0.7"/><circle cx="10.5" cy="10.5" r="4.2" fill="#fff" stroke="#333" stroke-width="0.9"/><path d="M10.5 8 V10.5 L13 11.5" stroke="#333" stroke-width="0.8" fill="none"/><path d="M3.5 11 Q5 14.5 9 14.5" fill="none" stroke="#4a8fb6" stroke-width="1.8"/><path d="M2.5 8.5 L6.8 10.3 L3.2 13 Z" fill="#4a8fb6"/></svg>
<svg class="b" style="left:26px;top:267px;" width="19" height="18" viewBox="0 0 19 18"><path d="M0.8 3 Q0.8 1 2.8 1 H7 L9 3 H15.5 Q17.2 3 17.2 4.8 V14.5 Q17.2 16.2 15.5 16.2 H2.5 Q0.8 16.2 0.8 14.5 Z" fill="url(#gw)" stroke="#444" stroke-width="0.9" stroke-linejoin="round"/><path d="M1 4.6 H17" stroke="#777" stroke-width="0.7"/><circle cx="10" cy="10.5" r="4.6" fill="#fff" stroke="#222" stroke-width="1.2"/><path d="M10 10.5 L7.5 8" stroke="#222" stroke-width="0.9"/><path d="M10 10.5 L13 12.2" stroke="#d22" stroke-width="1.6"/><path d="M10 6.8 V7.8 M6.4 10.5 H7.4 M12.6 8 L13.3 7.3" stroke="#444" stroke-width="0.7"/></svg>
<svg class="b" style="left:26px;top:289px;" width="19" height="18" viewBox="0 0 19 18"><path d="M0.8 3 Q0.8 1 2.8 1 H7 L9 3 H15.5 Q17.2 3 17.2 4.8 V14.5 Q17.2 16.2 15.5 16.2 H2.5 Q0.8 16.2 0.8 14.5 Z" fill="url(#gw)" stroke="#444" stroke-width="0.9" stroke-linejoin="round"/><path d="M1 4.6 H17" stroke="#777" stroke-width="0.7"/><text x="4.2" y="15" style="font-family:Liberation Serif,serif" font-weight="bold" font-size="12" fill="#2d7aa6">A</text></svg>
<svg class="b" style="left:26px;top:311px;" width="19" height="18" viewBox="0 0 19 18"><path d="M6 8 V17 H17.2 V8" fill="#e9e9e9" stroke="#444" stroke-width="0.9"/><path d="M8 9 V15 H16" fill="none" stroke="#888" stroke-width="0.8"/><rect x="0.8" y="0.8" width="12" height="10.5" fill="#fff" stroke="#444" stroke-width="0.9"/><rect x="0.8" y="0.8" width="12" height="2.6" fill="#4a8fb6" stroke="#1b5a80" stroke-width="0.6"/><path d="M0.8 6 H12.8 M0.8 8.6 H12.8 M4.8 3.4 V11.3 M8.8 3.4 V11.3" stroke="#555" stroke-width="0.7"/><path d="M11 7 l1 2 2.2-.6 -.8 2.1 2 1.2 -2.2.8 .3 2.3 -2-1.1 -1.6 1.7 -.4-2.3 -2.3-.2 1.6-1.6 -1.2-2 2.3.3Z" fill="#f39a1c" stroke="#c25e05" stroke-width="0.4"/><path d="M5 5 L10.5 10.5" stroke="#333" stroke-width="1.1"/><circle cx="10.8" cy="10.8" r="1.1" fill="#fff" stroke="#333" stroke-width="0.6"/></svg>
<svg class="b" style="left:26px;top:333px;" width="19" height="18" viewBox="0 0 19 18"><path d="M0.8 3 Q0.8 1 2.8 1 H7 L9 3 H15.5 Q17.2 3 17.2 4.8 V14.5 Q17.2 16.2 15.5 16.2 H2.5 Q0.8 16.2 0.8 14.5 Z" fill="url(#gw)" stroke="#444" stroke-width="0.9" stroke-linejoin="round"/><path d="M1 4.6 H17" stroke="#777" stroke-width="0.7"/><path d="M13 8.2 V6.8 H5.5 L9.5 10.8 L5.5 14.8 H13 V13.4" fill="none" stroke="#111" stroke-width="1.3" stroke-linejoin="miter"/></svg>
<svg class="b" style="left:26px;top:355px;" width="19" height="18" viewBox="0 0 19 18"><path d="M5.5 2.5 H17 M5.5 8 H17 M5.5 14 H10" stroke="#222" stroke-width="1.5"/><circle cx="2.2" cy="2.5" r="1.6" fill="#fff" stroke="#666" stroke-width="0.8"/><circle cx="2.2" cy="8" r="1.7" fill="#6cb6df" stroke="#2a6f99" stroke-width="0.7"/><circle cx="2.2" cy="14" r="1.7" fill="#f5c518" stroke="#9a7400" stroke-width="0.7"/><circle cx="14" cy="14.5" r="2.6" fill="none" stroke="#222" stroke-width="2.2" stroke-dasharray="1.5 1.22"/><circle cx="14" cy="14.5" r="2" fill="#222"/><circle cx="14" cy="14.5" r="0.9" fill="#f7f7f7"/></svg>
<svg class="b" style="left:26px;top:377px;" width="19" height="18" viewBox="0 0 19 18"><path d="M3 3.5 L15.5 0.8 V14 L3 17 Z" fill="#fbfbfb" stroke="#444" stroke-width="0.9"/><path d="M9.3 0 V18" stroke="#222" stroke-width="1" stroke-dasharray="2.4 1.6"/></svg>
<svg class="b" style="left:26px;top:399px;" width="19" height="18" viewBox="0 0 19 18"><path d="M3 3.5 L15.5 0.8 V14 L3 17 Z" fill="#fbfbfb" stroke="#444" stroke-width="0.9"/><path d="M9.3 0 V18" stroke="#222" stroke-width="1" stroke-dasharray="2.4 1.6"/></svg>
<svg class="b" style="left:26px;top:421px;" width="19" height="18" viewBox="0 0 19 18"><path d="M3 3.5 L15.5 0.8 V14 L3 17 Z" fill="#fbfbfb" stroke="#444" stroke-width="0.9"/><path d="M9.3 0 V18" stroke="#222" stroke-width="1" stroke-dasharray="2.4 1.6"/></svg>
<svg class="b" style="left:26px;top:443px;" width="19" height="18" viewBox="0 0 19 18"><path d="M3 16 V3 M3 15.5 H15" stroke="#111" stroke-width="1.8" fill="none"/><path d="M3 0 L5.8 4.5 H0.2 Z M18 15.5 L13.5 18.3 V12.7 Z" fill="#111"/><rect x="1.5" y="14" width="3" height="3" fill="#111"/></svg>
<svg class="b" style="left:26px;top:465px;" width="19" height="18" viewBox="0 0 19 18"><path d="M2 11 L11 7 V2 L16.5 4 V13 L7 17.5 L2 15 Z" fill="url(#gw)" stroke="#444" stroke-width="0.9" stroke-linejoin="round"/><path d="M7 13.5 L16.5 9 M7 13.5 V17.5 M2 11 L7 13.5" fill="none" stroke="#444" stroke-width="0.8"/><path d="M9 12 L14 6 L15 10 Z" fill="#4a8fb6" stroke="#1b5a80" stroke-width="0.6"/><path d="M6.5 2.5 l1 2 2.2-.6 -.8 2.1 2 1.2 -2.2.8 .3 2.3 -2-1.1 -1.6 1.7 -.4-2.3 -2.3-.2 1.6-1.6 -1.2-2 2.3.3Z" fill="#f39a1c" stroke="#c25e05" stroke-width="0.4"/><path d="M0.5 0.5 L6 6.5" stroke="#333" stroke-width="1.2"/><circle cx="6.3" cy="6.8" r="1.3" fill="#fff" stroke="#333" stroke-width="0.7"/></svg>
<svg class="b" style="left:26px;top:487px;" width="19" height="18" viewBox="0 0 19 18"><path d="M14 1 H0.8 V11 Q0.8 17 7 17 H18" fill="none" stroke="#333" stroke-width="1.1"/></svg>
<svg class="b" style="left:26px;top:509px;" width="19" height="18" viewBox="0 0 19 18"><path d="M1.5 4.5 Q1.5 3 3 2.5 L9 0.8 L15.5 2.5 Q17 3 17 4.5 V13 L7.5 17.2 L1.5 14 Z" fill="url(#gw)" stroke="#444" stroke-width="0.9" stroke-linejoin="round"/><rect x="6.8" y="5.8" width="9.2" height="8.6" rx="2.2" fill="#cfcfcf" stroke="#333" stroke-width="0.9" transform="skewY(-8) translate(0,1.6)"/><rect x="9" y="8" width="5" height="4.4" rx="1" fill="#777" stroke="#333" stroke-width="0.7" transform="skewY(-8) translate(0,1.6)"/><path d="M1.5 4.5 Q5 7 7 7 M7 7 V17" fill="none" stroke="#444" stroke-width="0.8"/></svg>
<svg class="b" style="left:26px;top:531px;" width="19" height="18" viewBox="0 0 19 18"><path d="M0.8 2 H4 L5.2 7 H8 V14.5 H0.8 Z" fill="url(#gb)" stroke="#1b5a80" stroke-width="0.9" stroke-linejoin="round"/><path d="M19.2 2 H16 L14.8 7 H12 V14.5 H19.2 Z" fill="url(#gw)" stroke="#444" stroke-width="0.9" stroke-linejoin="round"/><path d="M10 -0.5 V18" stroke="#222" stroke-width="0.9"/></svg>
<svg class="b" style="left:26px;top:553px;" width="19" height="18" viewBox="0 0 19 18"><path d="M8 3 L13.5 1 L18 3 V15 L13 17.5 L8 15 Z" fill="url(#gw)" stroke="#444" stroke-width="0.9" stroke-linejoin="round"/><path d="M13 5 V17.5 M8 3 L13 5 L18 3" fill="none" stroke="#555" stroke-width="0.7"/><path d="M0.8 7.5 L5 5.8 L9.8 7.5 V13.8 L5.2 16 L0.8 13.8 Z" fill="url(#gb)" stroke="#1b5a80" stroke-width="0.9" stroke-linejoin="round"/><path d="M0.8 7.5 L5.2 9.3 L9.8 7.5 M5.2 9.3 V16" fill="none" stroke="#1b5a80" stroke-width="0.7"/></svg>
<svg class="b" style="left:12px;top:173px;" width="18" height="18" viewBox="0 0 18 18"><g transform="translate(0,0) scale(1.0)"><path d="M4.1 1.3 L8.4 0.2 L12.8 1.6 V6.3 L17.2 8.4 V14.4 L11.8 17.6 L0.4 10 V5.6 L3.2 4.7 Z" fill="#f1c31a" stroke="#7d5e08" stroke-width="1" stroke-linejoin="round"/><path d="M4.1 1.3 L8.4 0.2 L12.8 1.6 L8.6 3.2 Z M8.6 8 L12.8 6.3 L17.2 8.4 L12.3 10.6 Z" fill="#fde670"/><path d="M8.6 3.2 L12.8 1.6 V6.3 L8.6 8 Z M12.3 10.6 L17.2 8.4 V14.4 L11.8 17.6 Z" fill="#f9dc48"/><path d="M4.1 1.3 L8.6 3.2 L12.8 1.6 M8.6 3.2 V8 L12.8 6.3 M8.6 8 L12.3 10.6 L17.2 8.4 M12.3 10.6 L11.8 17.6 M3.2 4.7 L4.1 1.3" fill="none" stroke="#7d5e08" stroke-width="0.7"/></g></svg>
<svg class="b" style="left:52px;top:174px;" width="18" height="17" viewBox="0 0 18 17"><rect x="0.8" y="0.8" width="16.4" height="15.4" rx="1.5" fill="#fff" stroke="#1b5a80" stroke-width="1.1"/><rect x="0.8" y="0.8" width="16.4" height="3" fill="#4a8fb6" stroke="#1b5a80" stroke-width="0.6"/><path d="M7.5 6.8 H15 M7.5 10 H15 M7.5 13.2 H15" stroke="#333" stroke-width="1.1"/><path d="M3 5.8 h3 v2 h-3z M3 9 h3 v2 h-3z M3 12.2 h3 v2 h-3z" fill="#4a8fb6" stroke="#1b5a80" stroke-width="0.5"/></svg>
<svg class="b" style="left:94px;top:173px;" width="16" height="18" viewBox="0 0 16 18"><path d="M1.5 1 V17 M1.5 1 H5 M1.5 5 H6 M1.5 13 H8" fill="none" stroke="#333" stroke-width="1.1"/><rect x="5" y="0.8" width="5.5" height="2.6" fill="#eee" stroke="#333" stroke-width="0.8"/><rect x="6" y="3.6" width="7.5" height="5.8" rx="1" fill="#f2f2f2" stroke="#333" stroke-width="0.9"/><rect x="8" y="11" width="7" height="5.8" rx="1" fill="#f2f2f2" stroke="#333" stroke-width="0.9"/><path d="M4 9 V17" stroke="#333" stroke-width="0.9"/></svg>
<svg class="b" style="left:132px;top:173px;" width="18" height="18" viewBox="0 0 18 18"><circle cx="9" cy="9" r="5.6" fill="none" stroke="#111" stroke-width="1.7"/><path d="M9 0 V18 M0 9 H18" stroke="#111" stroke-width="1.5"/></svg>
<svg class="b" style="left:172px;top:172px;" width="19" height="19" viewBox="0 0 19 19"><defs><radialGradient id="gsh" cx="0.35" cy="0.3" r="0.8"><stop offset="0" stop-color="#fff" stop-opacity="0.55"/><stop offset="0.6" stop-color="#fff" stop-opacity="0"/><stop offset="1" stop-color="#000" stop-opacity="0.25"/></radialGradient></defs><path d="M9.5 9.5 L9.5 0.5 A9 9 0 0 0 0.5 9.5 Z" fill="#2f6fd0"/><path d="M9.5 9.5 L0.5 9.5 A9 9 0 0 0 9.5 18.5 Z" fill="#3da63a"/><path d="M9.5 9.5 L9.5 18.5 A9 9 0 0 0 18.5 9.5 Z" fill="#f0c020"/><path d="M9.5 9.5 L18.5 9.5 A9 9 0 0 0 9.5 0.5 Z" fill="#d93a2b"/><circle cx="9.5" cy="9.5" r="9" fill="url(#gsh)" stroke="#555" stroke-width="0.5"/><ellipse cx="12.5" cy="6.5" rx="2.6" ry="4.2" transform="rotate(-35 12.5 6.5)" fill="#1a1a1a"/><path d="M9.5 9.5 L3 4" stroke="#fff" stroke-width="0.8" opacity="0.7"/></svg>
<svg class="b" style="left:7px;top:199px;" width="17" height="19" viewBox="0 0 17 19"><path d="M0.8 2.5 Q8.5 5.5 16.2 2.5 L10 10 V16 L7 18 V10 Z" fill="url(#gw)" stroke="#444" stroke-width="0.9"/><ellipse cx="8.5" cy="2.3" rx="7.8" ry="1.9" fill="#8fc6e0" stroke="#1b5a80" stroke-width="0.9"/></svg>
<div class="b" style="left:0px;top:1226px;width:241px;height:1px;background:#fff;"></div>
<div class="b" style="left:0px;top:1227px;width:241px;height:15px;background:#f0f0f0;"></div>
<div class="b" style="left:17px;top:1227px;width:133px;height:15px;background:#cdcdcd;"></div>
<svg class="b" style="left:3px;top:1228px;" width="10" height="12" viewBox="0 0 10 12"><path d="M7 2.5 L3 6.5 L7 10.5" fill="none" stroke="#444" stroke-width="1.7"/></svg>
<svg class="b" style="left:226px;top:1228px;" width="10" height="12" viewBox="0 0 10 12"><path d="M3 2.5 L7 6.5 L3 10.5" fill="none" stroke="#444" stroke-width="1.7"/></svg>
<div class="b" style="left:0px;top:1245px;width:241px;height:1px;background:#c8c8c8;"></div>
<div class="b" style="left:0px;top:1246px;width:241px;height:2px;background:#fafafa;"></div>
<div class="b" style="left:0px;top:1247px;width:241px;height:1px;background:#d6d6d6;"></div>
<div class="b" style="left:66px;top:1248px;width:57px;height:15px;background:#fff;"></div>
<div class="b" style="left:0px;top:1248px;width:66px;height:15px;background:#adafb3;"></div>
<div class="b" style="left:1px;top:1248px;width:65px;height:1px;background:#1c1c1c;"></div>
<div class="b" style="left:16px;top:1249px;width:1px;height:14px;background:#d9dadc;"></div>
<div class="b" style="left:15px;top:1249px;width:1px;height:14px;background:#8d8f93;"></div>
<div class="b" style="left:32px;top:1249px;width:1px;height:14px;background:#d9dadc;"></div>
<div class="b" style="left:31px;top:1249px;width:1px;height:14px;background:#8d8f93;"></div>
<div class="b" style="left:48px;top:1249px;width:1px;height:14px;background:#d9dadc;"></div>
<div class="b" style="left:47px;top:1249px;width:1px;height:14px;background:#8d8f93;"></div>
<div class="b" style="left:64px;top:1249px;width:2px;height:14px;background:#8a8a8a;"></div>
<svg class="b" style="left:1px;top:1249px;" width="64" height="14" viewBox="0 0 64 14"><path d="M4 3 V11" stroke="#8f9194" stroke-width="1.5"/><path d="M11 3 L6 7 L11 11 Z" fill="#8f9194"/><path d="M27 3 L21 7 L27 11 Z" fill="#8f9194"/><path d="M37 3 L43 7 L37 11 Z" fill="#8f9194"/><path d="M52 3 L58 7 L52 11 Z" fill="#8f9194"/><path d="M60 3 V11" stroke="#8f9194" stroke-width="1.5"/></svg>
<div class="b" style="left:122px;top:1248px;width:69px;height:16px;background:#d2d2d2;border:1px solid #8f8f8f;box-sizing:border-box;"></div>
<div class="b" style="left:190px;top:1248px;width:109px;height:16px;background:#d2d2d2;border:1px solid #8f8f8f;box-sizing:border-box;"></div>
<div class="b" style="left:0px;top:1263px;width:1575px;height:1px;background:#8f8f8f;"></div>
<span class="t " style="left:78.50px;top:1247.34px;font-size:12px;line-height:16px;letter-spacing:-0.013px;color:#000;font-weight:bold;">Model</span>
<span class="t " style="left:133.40px;top:1247.34px;font-size:12px;line-height:16px;letter-spacing:-0.533px;color:#000;">3D Views</span>
<span class="t " style="left:200.30px;top:1247.34px;font-size:12px;line-height:16px;letter-spacing:-0.003px;color:#000;">Motion Study 1</span>
<span class="t " style="left:1278.00px;top:1265.84px;font-size:12px;line-height:16px;letter-spacing:-0.086px;color:#000;">Editing Part</span>
<span class="t " style="left:1457.00px;top:1265.84px;font-size:12px;line-height:16px;letter-spacing:-0.333px;color:#000;">MMGS</span>
<svg class="b" style="left:1367px;top:1265px;" width="18" height="16" viewBox="0 0 18 16"><path d="M1.5 15 h2.4 v-1.6 h-2.4z M5 15 h2.4 v-2.6 h-2.4z M8.5 15 h2.4 v-3.8 h-2.4z M12 15 h2.4 v-6 h-2.4z" fill="#1f5f86"/><path d="M4 12 Q10.5 11.5 12.8 5.5" fill="none" stroke="#111" stroke-width="2.1"/><path d="M9.6 5.8 L13.6 0.4 L16.2 6.6 Z" fill="#111"/><path d="M5.6 0.8 L10.2 9 H1 Z" fill="#f8c61c" stroke="#c0720a" stroke-width="0.9" stroke-linejoin="round"/><path d="M5.6 3.6 V6.2 M5.6 7.2 V8" stroke="#7a1a08" stroke-width="1.2"/></svg>
<svg class="b" style="left:1511px;top:1272px;" width="8" height="5" viewBox="0 0 8 5"><path d="M0.5 4.2 L3.7 0.8 L7 4.2 Z" fill="#333"/></svg>
<svg class="b" style="left:1543px;top:1266px;" width="18" height="15" viewBox="0 0 18 15"><path d="M1 6 L10 1 L17 6 V10 L8 14.5 L1 10 Z" fill="#f2f2f2" stroke="#333" stroke-width="1"/><path d="M1 6 L8 10.5 L17 6 M8 10.5 V14.5" fill="none" stroke="#333" stroke-width="0.9"/><ellipse cx="8" cy="5.5" rx="2.4" ry="1.6" fill="none" stroke="#333" stroke-width="0.9"/><path d="M10 6 L13 4" stroke="#333" stroke-width="0.9"/></svg>
<svg class="b" style="left:1565px;top:1276px;" width="8" height="5" viewBox="0 0 8 5"><path d="M1 4 h1.4 M4 4 h1.4 M4 1.5 h1.4" stroke="#999" stroke-width="1.2"/></svg>
<svg class="b" style="left:734px;top:128px;" width="20" height="20" viewBox="0 0 20 20"><path d="M8 12 L2 18" stroke="#7ab4d4" stroke-width="3.2" stroke-linecap="round"/><circle cx="12" cy="7.5" r="6.2" fill="#eef3f6" stroke="#8a8a8a" stroke-width="1.3"/><path d="M12 3 l1.6 1.8 h-3.2z M12 12 l1.6 -1.8 h-3.2z M7.5 7.5 l1.8 -1.6 v3.2z M16.5 7.5 l-1.8 -1.6 v3.2z" fill="#444"/></svg>
<svg class="b" style="left:760px;top:128px;" width="20" height="20" viewBox="0 0 20 20"><rect x="7" y="1" width="12" height="12" fill="none" stroke="#333" stroke-width="1" stroke-dasharray="2.4 1.6"/><path d="M8 12.5 L2 18.5" stroke="#7ab4d4" stroke-width="3.2" stroke-linecap="round"/><circle cx="11.5" cy="8" r="6" fill="#eef3f6" stroke="#8a8a8a" stroke-width="1.3"/></svg>
<svg class="b" style="left:786px;top:128px;" width="20" height="20" viewBox="0 0 20 20"><g transform="rotate(-32 9 10)"><path d="M0.5 6.5 H10 L12 8 H17 V13 H12 L10 14.5 H0.5 Q-1 10.5 0.5 6.5Z" fill="url(#gw)" stroke="#8a8a8a" stroke-width="0.9"/><ellipse cx="1" cy="10.5" rx="1.6" ry="3.4" fill="#e8e8e8" stroke="#8a8a8a" stroke-width="0.8"/></g><path d="M10 15 H18" stroke="#4c8fb8" stroke-width="2.4"/><path d="M7.5 15 L12 11.5 V18.5 Z" fill="#4c8fb8"/></svg>
<svg class="b" style="left:812px;top:128px;" width="20" height="20" viewBox="0 0 20 20"><defs><pattern id="hat" width="2.5" height="2.5" patternUnits="userSpaceOnUse" patternTransform="rotate(45)"><rect width="2.5" height="2.5" fill="#6aa6c8"/><path d="M0 0 H2.5" stroke="#2b6f99" stroke-width="1.3"/></pattern></defs><path d="M1 6 Q10 0 19 6 V14 Q19 16 16 17 V9 Q10 6 5 9 V19 Q1 18 1 16 Z" fill="#d9d9d9" stroke="#777" stroke-width="0.9"/><path d="M1.2 7.5 L5 9.5 V19 L1.2 16.5 Z M19 7.5 L15.5 9 V17 L19 14.5 Z" fill="url(#hat)" stroke="#2b6f99" stroke-width="0.8"/><path d="M5 9.5 Q10 6 15.5 9 V17 Q10 13 5 16.5Z" fill="url(#gw)"/></svg>
<svg class="b" style="left:838px;top:127px;" width="21" height="21" viewBox="0 0 21 21"><path d="M5 1 H12 L9 4.5 H12.5 L3 10.5 L6 6 H2.5 Z" fill="#f6a21e" stroke="#d06a10" stroke-width="0.6"/><g transform="translate(1,1)"><g transform="rotate(-32 9 10)"><path d="M0.5 6.5 H10 L12 8 H17 V13 H12 L10 14.5 H0.5 Q-1 10.5 0.5 6.5Z" fill="url(#gw)" stroke="#8a8a8a" stroke-width="0.9"/><ellipse cx="1" cy="10.5" rx="1.6" ry="3.4" fill="#e8e8e8" stroke="#8a8a8a" stroke-width="0.8"/></g></g><text x="10.5" y="20.5" style="font-family:Liberation Serif,serif" font-size="13" font-weight="bold" fill="#4c8fb8">A</text></svg>
<svg class="b" style="left:865px;top:128px;" width="19" height="20" viewBox="0 0 19 20"><path d="M6 1 H18 V13 L12.5 18.5 M6 1 L1 6.5 M18 1 L12.5 6.5" fill="#fff" stroke="#444" stroke-width="1"/><path d="M6 1 H18 V13 L12.5 18.5 V6.5 H1 Z" fill="#fdfdfd" stroke="#444" stroke-width="1"/><rect x="1" y="6.5" width="11.5" height="12" fill="url(#gb2)" stroke="#1b5a80" stroke-width="1.1"/><defs><linearGradient id="gb2" x1="0" y1="0" x2="0" y2="1"><stop offset="0" stop-color="#b6dcf0"/><stop offset="1" stop-color="#7db7d8"/></linearGradient></defs><path d="M10 1.5 V5.5 M8.6 4 L10 5.6 L11.4 4 M13.5 10 H17.5 M15 8.6 L13.4 10 L15 11.4" fill="none" stroke="#333" stroke-width="0.9"/></svg>
<svg class="b" style="left:890.3px;top:136.8px;" width="6.4" height="3.6" viewBox="0 0 6.4 3.6"><path d="M0 0 H6.4 L3.2 3.5 Z" fill="#9a9a9a"/></svg>
<svg class="b" style="left:905px;top:127px;" width="18" height="21" viewBox="0 0 18 21"><path d="M1 4 L9 1 L17 3.5 V16 L7 20 L1 16.5 Z" fill="#fff" stroke="#666" stroke-width="0.9"/><path d="M1 4 L7 6.5 V20 L1 16.5 Z" fill="url(#gb)" stroke="#1b5a80" stroke-width="0.8"/><path d="M7 6.5 L11 5 V18.4 L7 20 Z" fill="#a9d3ea"/><path d="M1 4 L9 1 L17 3.5 L7 6.5 Z" fill="#d7ecf7" stroke="#666" stroke-width="0.8"/></svg>
<svg class="b" style="left:929.8px;top:136.8px;" width="6.4" height="3.6" viewBox="0 0 6.4 3.6"><path d="M0 0 H6.4 L3.2 3.5 Z" fill="#9a9a9a"/></svg>
<svg class="b" style="left:944px;top:130px;" width="21" height="17" viewBox="0 0 21 17"><path d="M1 8.5 Q10.5 -1 20 8.5 Q10.5 18 1 8.5 Z" fill="#ededed" stroke="#b8b8b8" stroke-width="1.2"/><circle cx="10.5" cy="8" r="4.3" fill="#8e8e8e"/><circle cx="10.5" cy="8" r="2" fill="#555"/><path d="M10.5 0 V17" stroke="#666" stroke-width="1"/><path d="M10.5 3.7 A4.3 4.3 0 0 1 10.5 12.3 Z" fill="#c9c9c9" opacity="0.7"/></svg>
<svg class="b" style="left:969.8px;top:136.8px;" width="6.4" height="3.6" viewBox="0 0 6.4 3.6"><path d="M0 0 H6.4 L3.2 3.5 Z" fill="#9a9a9a"/></svg>
<svg class="b" style="left:984px;top:127px;" width="22" height="22" viewBox="0 0 22 22"><defs><radialGradient id="gs1" cx="0.35" cy="0.28" r="0.85"><stop offset="0" stop-color="#fff" stop-opacity="0.75"/><stop offset="0.45" stop-color="#fff" stop-opacity="0"/><stop offset="1" stop-color="#000" stop-opacity="0.28"/></radialGradient></defs><path d="M8.5 8.5 L6.5 0.7400000000000002 A8 8 0 0 0 0.5 9.3 Z" fill="#3a78d8"/><path d="M8.5 8.5 L0.5 9.3 A8 8 0 0 0 10.1 16.34 Z" fill="#3fae3c"/><path d="M8.5 8.5 L10.1 16.34 A8 8 0 0 0 16.5 8.1 Z" fill="#f2c52a"/><path d="M8.5 8.5 L16.5 8.1 A8 8 0 0 0 6.5 0.7400000000000002 Z" fill="#dc4236"/><circle cx="8.5" cy="8.5" r="8" fill="url(#gs1)"/><g transform="rotate(45 14 14)"><rect x="11.3" y="5" width="5.4" height="11" fill="#f7de55" stroke="#7a5a10" stroke-width="0.8"/><rect x="11.3" y="3" width="5.4" height="2.6" rx="1" fill="#e2675a" stroke="#7a3a30" stroke-width="0.7"/><path d="M11.3 16 L14 21 L16.7 16 Z" fill="#e9d2a6" stroke="#7a5a10" stroke-width="0.7"/><path d="M13.2 19.6 L14 21 L14.8 19.6Z" fill="#333"/></g></svg>
<svg class="b" style="left:1009px;top:127px;" width="21" height="22" viewBox="0 0 21 22"><rect x="0.5" y="9" width="19.5" height="12" fill="#2a2a2a"/><path d="M1 14 H5 V17.5 H1Z M8.5 14 H12.5 V17.5 H8.5Z M16 14 H20 V17.5 H16Z M4.8 17.5 H8.7 V21 H4.8Z M12.3 17.5 H16.2 V21 H12.3Z M3.5 10.5 H6.5 V13.5 H3.5 Z M14 10.5 H17 V13.5 H14Z" fill="#f0f0f0"/><defs><radialGradient id="gs2" cx="0.35" cy="0.28" r="0.85"><stop offset="0" stop-color="#fff" stop-opacity="0.75"/><stop offset="0.45" stop-color="#fff" stop-opacity="0"/><stop offset="1" stop-color="#000" stop-opacity="0.28"/></radialGradient></defs><path d="M10.5 8.5 L8.55 0.9340000000000002 A7.8 7.8 0 0 0 2.7 9.28 Z" fill="#3a78d8"/><path d="M10.5 8.5 L2.7 9.28 A7.8 7.8 0 0 0 12.06 16.144 Z" fill="#3fae3c"/><path d="M10.5 8.5 L12.06 16.144 A7.8 7.8 0 0 0 18.3 8.11 Z" fill="#f2c52a"/><path d="M10.5 8.5 L18.3 8.11 A7.8 7.8 0 0 0 8.55 0.9340000000000002 Z" fill="#dc4236"/><circle cx="10.5" cy="8.5" r="7.8" fill="url(#gs2)"/></svg>
<svg class="b" style="left:1035.8px;top:136.8px;" width="6.4" height="3.6" viewBox="0 0 6.4 3.6"><path d="M0 0 H6.4 L3.2 3.5 Z" fill="#9a9a9a"/></svg>
<svg class="b" style="left:1050px;top:129px;" width="21" height="19" viewBox="0 0 21 19"><rect x="1" y="1" width="18.5" height="12.5" fill="url(#gg)" stroke="#555" stroke-width="1.5"/><path d="M10.2 13.5 V16.5" stroke="#555" stroke-width="2"/><path d="M5.5 17 H15" stroke="#555" stroke-width="1.8"/></svg>
<svg class="b" style="left:1075.8px;top:136.8px;" width="6.4" height="3.6" viewBox="0 0 6.4 3.6"><path d="M0 0 H6.4 L3.2 3.5 Z" fill="#9a9a9a"/></svg>
<svg class="b" style="left:1452px;top:131px;" width="13" height="14" viewBox="0 0 13 14"><rect x="0.7" y="0.7" width="11.6" height="12.6" fill="none" stroke="#a6a6a6" stroke-width="1.1"/><path d="M2 7 L5 4.5 V9.5 Z" fill="#a6a6a6"/></svg>
<svg class="b" style="left:1478px;top:131px;" width="13" height="14" viewBox="0 0 13 14"><rect x="0.7" y="0.7" width="11.6" height="12.6" fill="none" stroke="#a6a6a6" stroke-width="1.1"/><path d="M11 7 L8 4.5 V9.5 Z" fill="#a6a6a6"/></svg>
<div class="b" style="left:1505px;top:142px;width:10px;height:2px;background:#a6a6a6;"></div>
<svg class="b" style="left:1529px;top:131px;" width="16" height="14" viewBox="0 0 16 14"><path d="M4.5 4 V0.7 H14.8 V8.3 H11" fill="none" stroke="#a6a6a6" stroke-width="1.2"/><rect x="0.7" y="4.7" width="10.3" height="8.6" fill="#fff" stroke="#a6a6a6" stroke-width="1.2"/></svg>
<svg class="b" style="left:1556px;top:132px;" width="12" height="12" viewBox="0 0 12 12"><path d="M1 1 L11 11 M11 1 L1 11" stroke="#a6a6a6" stroke-width="1.3"/></svg>
<svg class="b" style="left:0;top:0" width="1575" height="1281" viewBox="0 0 1575 1281"><polygon points="655,390.3 830.3,303.7 835.4,302.2 1453.7,750.3 971.1,990.7 655,762" fill="#4d4c4a"/><polygon points="827.2,325.5 704.7,387.4 731.1,391 828.6,342.8" fill="#a09d9a"/><polygon points="975.2,947.6 1418.9,730.2 1419.9,746.7 975.2,966.3" fill="#a09d9a"/><polygon points="677.3,400.1 993,445.5 993.5,461.8 676.8,417.9" fill="#62615d"/><polygon points="655,408 676.8,398.6 676.8,417.9 655,428" fill="#62615d"/><polygon points="840.8,827.4 1103,864.7 1074.5,878.4 871.3,849.2" fill="#62615d"/><line x1="1452.4" y1="749.8" x2="971.4" y2="989.4" stroke="#b9b7b4" stroke-width="1.0"/><line x1="835.4" y1="302.2" x2="1453.7" y2="750.3" stroke="#0b0b0b" stroke-width="1.25"/><line x1="1453.7" y1="750.6" x2="971.1" y2="990.9" stroke="#0b0b0b" stroke-width="1.25"/><line x1="1451.5" y1="748.6" x2="971.6" y2="988.0" stroke="#0b0b0b" stroke-width="1.25"/><line x1="971.1" y1="990.7" x2="655" y2="762" stroke="#0b0b0b" stroke-width="1.25"/><line x1="971.6" y1="988.2" x2="655" y2="759.6" stroke="#0b0b0b" stroke-width="1.25"/><line x1="830.3" y1="303.7" x2="655" y2="390.3" stroke="#0b0b0b" stroke-width="1.25"/><line x1="830.3" y1="303.7" x2="835.4" y2="302.2" stroke="#0b0b0b" stroke-width="1.25"/><line x1="832.8" y1="304.2" x2="1418.4" y2="727.9" stroke="#0b0b0b" stroke-width="1.25"/><line x1="827.7" y1="324" x2="1385.4" y2="725.7" stroke="#0b0b0b" stroke-width="1.25"/><line x1="827.2" y1="326.3" x2="1382.5" y2="727.6" stroke="#0b0b0b" stroke-width="1.25"/><line x1="828.6" y1="342.8" x2="934" y2="419.6" stroke="#0b0b0b" stroke-width="1.25"/><line x1="993.5" y1="461.3" x2="1217.4" y2="623.5" stroke="#0b0b0b" stroke-width="1.25"/><line x1="1246.9" y1="645.8" x2="1368.6" y2="733.5" stroke="#0b0b0b" stroke-width="1.25"/><line x1="830.3" y1="303.7" x2="827.7" y2="322.5" stroke="#0b0b0b" stroke-width="1.25"/><line x1="827.2" y1="323.5" x2="655" y2="408.0" stroke="#0b0b0b" stroke-width="1.25"/><line x1="827.2" y1="325.2" x2="704.7" y2="387.2" stroke="#0b0b0b" stroke-width="1.25"/><line x1="827.4" y1="324" x2="828.6" y2="342.8" stroke="#0b0b0b" stroke-width="1.25"/><line x1="828.6" y1="342.8" x2="731.1" y2="391" stroke="#0b0b0b" stroke-width="1.25"/><line x1="699.6" y1="386.9" x2="968.1" y2="424.7" stroke="#0b0b0b" stroke-width="1.25"/><line x1="676.8" y1="398.1" x2="992.4" y2="443.5" stroke="#0b0b0b" stroke-width="1.25"/><line x1="677.3" y1="400.1" x2="993" y2="445.5" stroke="#0b0b0b" stroke-width="1.25"/><line x1="676.8" y1="417.9" x2="993.5" y2="461.8" stroke="#0b0b0b" stroke-width="1.25"/><line x1="993" y1="443.5" x2="993.5" y2="461.8" stroke="#0b0b0b" stroke-width="1.25"/><line x1="676.8" y1="398.1" x2="676.8" y2="417.9" stroke="#0b0b0b" stroke-width="1.25"/><line x1="676.8" y1="417.9" x2="655" y2="428" stroke="#0b0b0b" stroke-width="1.25"/><line x1="977.2" y1="926.7" x2="1385.4" y2="725.7" stroke="#0b0b0b" stroke-width="1.25"/><line x1="974.7" y1="945" x2="1418.4" y2="727.7" stroke="#0b0b0b" stroke-width="1.25"/><line x1="975.2" y1="947.6" x2="1418.9" y2="730.2" stroke="#0b0b0b" stroke-width="1.25"/><line x1="975.2" y1="966.3" x2="1419.9" y2="746.7" stroke="#0b0b0b" stroke-width="1.25"/><line x1="1419.4" y1="729" x2="1419.9" y2="746.7" stroke="#0b0b0b" stroke-width="1.25"/><line x1="1385.4" y1="725.7" x2="1418.4" y2="728.1" stroke="#0b0b0b" stroke-width="1.25"/><line x1="977.2" y1="926.7" x2="974.7" y2="945" stroke="#0b0b0b" stroke-width="1.25"/><line x1="974.7" y1="945" x2="975.2" y2="966.3" stroke="#0b0b0b" stroke-width="1.25"/><line x1="655" y1="693.6" x2="977.2" y2="926.7" stroke="#0b0b0b" stroke-width="1.25"/><line x1="655" y1="715.3" x2="974.7" y2="945" stroke="#0b0b0b" stroke-width="1.25"/><line x1="655" y1="717.5" x2="974.7" y2="947.6" stroke="#0b0b0b" stroke-width="1.25"/><line x1="655" y1="735.3" x2="975.2" y2="966.3" stroke="#0b0b0b" stroke-width="1.25"/><line x1="814.4" y1="807.1" x2="1128.4" y2="852" stroke="#0b0b0b" stroke-width="1.25"/><line x1="837.7" y1="824.7" x2="1106.5" y2="862.6" stroke="#0b0b0b" stroke-width="1.25"/><line x1="840.8" y1="827.4" x2="1103" y2="864.7" stroke="#0b0b0b" stroke-width="1.25"/><line x1="871.3" y1="849.2" x2="1074.5" y2="878.4" stroke="#0b0b0b" stroke-width="1.25"/><line x1="1217.9" y1="606.7" x2="1231.1" y2="800.6" stroke="#0b0b0b" stroke-width="1.25"/><line x1="1219.9" y1="607.7" x2="1234.7" y2="799" stroke="#0b0b0b" stroke-width="1.25"/><line x1="1242.8" y1="623.5" x2="1255.5" y2="788.4" stroke="#0b0b0b" stroke-width="1.25"/><line x1="1244.8" y1="625" x2="1257.5" y2="787.4" stroke="#0b0b0b" stroke-width="1.25"/></svg>
<svg class="b" style="left:250px;top:1165px;" width="45" height="60" viewBox="0 0 45 60"><path d="M32.7 24 L18 13.8" stroke="#a81818" stroke-width="3.8"/><path d="M12.5 11.2 L21.8 11.2 L15 19 Z" fill="#8e1414"/><path d="M31 22 L20 14.5" stroke="#c83030" stroke-width="1"/><path d="M32.7 24 L16.5 32.4" stroke="#1818c4" stroke-width="3.8"/><path d="M8.1 36.6 L13.4 29.2 L17.9 36.6 Z" fill="#2020d8"/><path d="M9.5 35.8 L14.5 31.8 L15.5 33.5 Z" fill="#b9b9ff"/><path d="M32.5 24 V41" stroke="#156a18" stroke-width="3.4"/><path d="M27.8 41.2 L30 38.8 H35 L37.2 41.2 L32.4 47.8 Z" fill="#0f5212"/><text transform="translate(7.7,12.8) scale(0.66,1)" font-size="12" fill="#f01010">X</text><text transform="translate(2.4,41.7) scale(0.68,1)" font-size="12" font-style="italic" fill="#1010f0">Z</text><text transform="translate(29.2,56.7) scale(0.8,1)" font-size="12" fill="#0a8a0a">Y</text></svg>
<div class="b" style="left:1556px;top:174px;width:20px;height:144px;background:#d6d6d6;border:1px solid #8c8c8c;box-sizing:border-box;"></div>
<div class="b" style="left:1557px;top:175px;width:19px;height:23px;background:#f7f7f7;"></div>
<div class="b" style="left:1556px;top:198px;width:20px;height:1px;background:#8c8c8c;"></div>
<div class="b" style="left:1556px;top:221px;width:20px;height:1px;background:#8c8c8c;"></div>
<div class="b" style="left:1556px;top:245px;width:20px;height:1px;background:#8c8c8c;"></div>
<div class="b" style="left:1556px;top:269px;width:20px;height:1px;background:#8c8c8c;"></div>
<div class="b" style="left:1556px;top:293px;width:20px;height:1px;background:#8c8c8c;"></div>
<svg class="b" style="left:1559px;top:177px;" width="18" height="19" viewBox="0 0 18 19"><path d="M3 9 V18 H16 V9 L9.5 3 Z" fill="#fff" stroke="#333" stroke-width="1.2"/><path d="M7.5 18 V11.5 H11.5 V18" fill="#fff" stroke="#333" stroke-width="1.1"/><path d="M0.8 9.2 L9.5 1.2 L18.2 9.2" fill="none" stroke="#1b5a80" stroke-width="2.2"/></svg>
<svg class="b" style="left:1561px;top:201px;" width="16" height="19" viewBox="0 0 16 19"><path d="M1 5 L5 3 V16 L1 14 Z M5 3 L9 5 V18 L5 16Z M9 5 L13 3 V16 L9 18 Z M13 3 L16 5 V18 L13 16Z" fill="#f4f4f4" stroke="#444" stroke-width="0.9"/><path d="M5 3 L8 1 L12 2.5 M9 5 L12 2.5 L16 1.5" fill="none" stroke="#444" stroke-width="0.8"/></svg>
<svg class="b" style="left:1559px;top:225px;" width="18" height="17" viewBox="0 0 18 17"><path d="M1 1.5 H6 L7.5 3.5 H17 V15.5 H1 Z" fill="#dcdcdc" stroke="#444" stroke-width="1"/><path d="M4.5 7 H20 L16 15.8 H0.8 Z" fill="url(#gw)" stroke="#444" stroke-width="1"/></svg>
<svg class="b" style="left:1560px;top:249px;" width="17" height="16" viewBox="0 0 17 16"><rect x="0.7" y="0.7" width="18" height="14.6" rx="1.5" fill="#f7f7f7" stroke="#333" stroke-width="1.1"/><path d="M2.5 3 H8 V5 H2.5Z M11 3 H17 V5 H11Z M4.5 7.5 H6.5 V10.5 H8.5 V12.5 H2.5 V10.5 H4.5 Z M13 7.5 H15 V10.5 H17 V12.5 H11 V10.5 H13Z" fill="#f5c21a" stroke="#9a7400" stroke-width="0.5"/></svg>
<svg class="b" style="left:1560px;top:272px;" width="17" height="18" viewBox="0 0 17 18"><defs><radialGradient id="gs3" cx="0.35" cy="0.28" r="0.85"><stop offset="0" stop-color="#fff" stop-opacity="0.75"/><stop offset="0.45" stop-color="#fff" stop-opacity="0"/><stop offset="1" stop-color="#000" stop-opacity="0.28"/></radialGradient></defs><path d="M8 8.5 L6.125 1.2250000000000005 A7.5 7.5 0 0 0 0.5 9.25 Z" fill="#3a78d8"/><path d="M8 8.5 L0.5 9.25 A7.5 7.5 0 0 0 9.5 15.85 Z" fill="#3fae3c"/><path d="M8 8.5 L9.5 15.85 A7.5 7.5 0 0 0 15.5 8.125 Z" fill="#f2c52a"/><path d="M8 8.5 L15.5 8.125 A7.5 7.5 0 0 0 6.125 1.2250000000000005 Z" fill="#dc4236"/><circle cx="8" cy="8.5" r="7.5" fill="url(#gs3)"/></svg>
<svg class="b" style="left:1560px;top:297px;" width="17" height="18" viewBox="0 0 17 18"><rect x="0.7" y="0.7" width="18" height="16" rx="1" fill="#fff" stroke="#1b5a80" stroke-width="1.2"/><rect x="0.7" y="0.7" width="18" height="2.8" fill="#4a8fb6"/><path d="M2.5 6 h3.4 v1.8 h-3.4z M2.5 9.6 h3.4 v1.8 h-3.4z M2.5 13.2 h3.4 v1.8 h-3.4z" fill="#4a8fb6" stroke="#1b5a80" stroke-width="0.5"/><path d="M7.5 7 H17 M7.5 10.5 H17 M7.5 14 H17" stroke="#333" stroke-width="1"/></svg>
<div class="b" style="left:248px;top:47px;width:204px;height:861px;box-shadow:4px 4px 2.5px rgba(0,0,0,0.55);background:#888"></div>
<div class="b" style="left:245px;top:43px;width:210px;height:868px;background:#f7f7f7;border:1px solid #a3a3a3;box-sizing:border-box;box-shadow:inset 0 0 0 1px #fdfdfd;"></div>
<span class="t " style="left:279.00px;top:50.14px;font-size:12px;line-height:16px;letter-spacing:-0.485px;color:#000;">Boss/Base</span>
<svg class="b" style="left:436px;top:52px;" width="8" height="10" viewBox="0 0 8 10"><path d="M1.6 1.5 L5.9 5 L1.6 8.5 Z" fill="#3c3c3c"/></svg>

<span class="t " style="left:279.00px;top:74.14px;font-size:12px;line-height:16px;letter-spacing:-0.225px;color:#000;">Cut</span>
<svg class="b" style="left:436px;top:76px;" width="8" height="10" viewBox="0 0 8 10"><path d="M1.6 1.5 L5.9 5 L1.6 8.5 Z" fill="#3c3c3c"/></svg>

<span class="t " style="left:279.00px;top:98.14px;font-size:12px;line-height:16px;letter-spacing:-0.419px;color:#000;">Features</span>
<svg class="b" style="left:436px;top:100px;" width="8" height="10" viewBox="0 0 8 10"><path d="M1.6 1.5 L5.9 5 L1.6 8.5 Z" fill="#3c3c3c"/></svg>

<span class="t " style="left:279.00px;top:122.14px;font-size:12px;line-height:16px;letter-spacing:0.189px;color:#000;">Pattern/Mirror</span>
<svg class="b" style="left:436px;top:124px;" width="8" height="10" viewBox="0 0 8 10"><path d="M1.6 1.5 L5.9 5 L1.6 8.5 Z" fill="#3c3c3c"/></svg>

<span class="t " style="left:279.00px;top:146.14px;font-size:12px;line-height:16px;letter-spacing:-0.258px;color:#000;">Fastening Feature</span>
<svg class="b" style="left:436px;top:148px;" width="8" height="10" viewBox="0 0 8 10"><path d="M1.6 1.5 L5.9 5 L1.6 8.5 Z" fill="#3c3c3c"/></svg>

<span class="t " style="left:279.00px;top:170.14px;font-size:12px;line-height:16px;letter-spacing:-0.261px;color:#000;">FeatureWorks</span>
<svg class="b" style="left:436px;top:172px;" width="8" height="10" viewBox="0 0 8 10"><path d="M1.6 1.5 L5.9 5 L1.6 8.5 Z" fill="#3c3c3c"/></svg>

<div class="b" style="left:279px;top:194px;width:172px;height:1px;background:#c9c9c9;"></div>
<div class="b" style="left:248px;top:200px;width:205px;height:24px;background:#fff;border:1px solid #b9b9b9;box-sizing:border-box;"></div>
<span class="t " style="left:279.00px;top:204.14px;font-size:12px;line-height:16px;letter-spacing:-0.337px;color:#000;">Surface</span>
<svg class="b" style="left:436px;top:206px;" width="8" height="10" viewBox="0 0 8 10"><path d="M1.6 1.5 L5.9 5 L1.6 8.5 Z" fill="#3c3c3c"/></svg>

<span class="t " style="left:279.00px;top:228.14px;font-size:12px;line-height:16px;letter-spacing:-0.669px;color:#000;">Face</span>
<svg class="b" style="left:436px;top:230px;" width="8" height="10" viewBox="0 0 8 10"><path d="M1.6 1.5 L5.9 5 L1.6 8.5 Z" fill="#3c3c3c"/></svg>

<span class="t " style="left:279.00px;top:252.14px;font-size:12px;line-height:16px;letter-spacing:-0.402px;color:#000;">Curve</span>
<svg class="b" style="left:436px;top:254px;" width="8" height="10" viewBox="0 0 8 10"><path d="M1.6 1.5 L5.9 5 L1.6 8.5 Z" fill="#3c3c3c"/></svg>

<span class="t " style="left:279.00px;top:276.14px;font-size:12px;line-height:16px;letter-spacing:-0.299px;color:#000;">Reference Geometry</span>
<svg class="b" style="left:436px;top:278px;" width="8" height="10" viewBox="0 0 8 10"><path d="M1.6 1.5 L5.9 5 L1.6 8.5 Z" fill="#3c3c3c"/></svg>

<div class="b" style="left:279px;top:300px;width:172px;height:1px;background:#c9c9c9;"></div>
<span class="t " style="left:279.00px;top:310.14px;font-size:12px;line-height:16px;letter-spacing:-0.185px;color:#000;">Sheet Metal</span>
<svg class="b" style="left:436px;top:312px;" width="8" height="10" viewBox="0 0 8 10"><path d="M1.6 1.5 L5.9 5 L1.6 8.5 Z" fill="#3c3c3c"/></svg>

<span class="t " style="left:279.00px;top:334.14px;font-size:12px;line-height:16px;letter-spacing:-0.252px;color:#000;">Structure System</span>
<svg class="b" style="left:436px;top:336px;" width="8" height="10" viewBox="0 0 8 10"><path d="M1.6 1.5 L5.9 5 L1.6 8.5 Z" fill="#3c3c3c"/></svg>

<span class="t " style="left:279.00px;top:358.14px;font-size:12px;line-height:16px;letter-spacing:-0.089px;color:#000;">Weldments</span>
<svg class="b" style="left:436px;top:360px;" width="8" height="10" viewBox="0 0 8 10"><path d="M1.6 1.5 L5.9 5 L1.6 8.5 Z" fill="#3c3c3c"/></svg>

<span class="t " style="left:279.00px;top:382.14px;font-size:12px;line-height:16px;letter-spacing:0.198px;color:#000;">Molds</span>
<svg class="b" style="left:436px;top:384px;" width="8" height="10" viewBox="0 0 8 10"><path d="M1.6 1.5 L5.9 5 L1.6 8.5 Z" fill="#3c3c3c"/></svg>

<span class="t " style="left:279.00px;top:406.14px;font-size:12px;line-height:16px;letter-spacing:-0.086px;color:#000;">Mesh</span>
<svg class="b" style="left:436px;top:408px;" width="8" height="10" viewBox="0 0 8 10"><path d="M1.6 1.5 L5.9 5 L1.6 8.5 Z" fill="#3c3c3c"/></svg>

<div class="b" style="left:279px;top:430px;width:172px;height:1px;background:#c9c9c9;"></div>
<span class="t " style="left:279.00px;top:440.14px;font-size:12px;line-height:16px;letter-spacing:-0.157px;color:#000;">Exploded View...</span>
<svg class="b" style="left:253px;top:439px;" width="18" height="18" viewBox="0 0 18 18"><defs>
<linearGradient id="gb" x1="0" y1="0" x2="1" y2="1"><stop offset="0" stop-color="#9fd0e6"/><stop offset="1" stop-color="#3a7fa8"/></linearGradient>
<linearGradient id="gy" x1="0" y1="0" x2="1" y2="1"><stop offset="0" stop-color="#ffe97a"/><stop offset="1" stop-color="#e0a90c"/></linearGradient>
<linearGradient id="gw" x1="0" y1="0" x2="1" y2="1"><stop offset="0" stop-color="#ffffff"/><stop offset="1" stop-color="#d2d2d2"/></linearGradient>
<linearGradient id="gg" x1="0" y1="0" x2="1" y2="1"><stop offset="0" stop-color="#f2f2f2"/><stop offset="1" stop-color="#cfcfcf"/></linearGradient>
</defs><g transform="translate(0,4.5) scale(0.78)"><path d="M4.1 1.3 L8.4 0.2 L12.8 1.6 V6.3 L17.2 8.4 V14.4 L11.8 17.6 L0.4 10 V5.6 L3.2 4.7 Z" fill="#f1c31a" stroke="#7d5e08" stroke-width="1" stroke-linejoin="round"/><path d="M4.1 1.3 L8.4 0.2 L12.8 1.6 L8.6 3.2 Z M8.6 8 L12.8 6.3 L17.2 8.4 L12.3 10.6 Z" fill="#fde670"/><path d="M8.6 3.2 L12.8 1.6 V6.3 L8.6 8 Z M12.3 10.6 L17.2 8.4 V14.4 L11.8 17.6 Z" fill="#f9dc48"/><path d="M4.1 1.3 L8.6 3.2 L12.8 1.6 M8.6 3.2 V8 L12.8 6.3 M8.6 8 L12.3 10.6 L17.2 8.4 M12.3 10.6 L11.8 17.6 M3.2 4.7 L4.1 1.3" fill="none" stroke="#7d5e08" stroke-width="0.7"/></g><path d="M12 1.5 L15 0.5 L18 1.5 V4.5 L15 5.5 L12 4.5 Z" fill="#4a8fb6" stroke="#1b5a80" stroke-width="0.7"/><path d="M15 6 V10 H7" fill="none" stroke="#111" stroke-width="1" stroke-dasharray="2 1.2"/></svg>
<span class="t " style="left:279.00px;top:464.14px;font-size:12px;line-height:16px;letter-spacing:-0.232px;color:#ababab;">Explode Line Sketch</span>
<svg class="b" style="left:253px;top:463px;" width="18" height="18" viewBox="0 0 18 18"><g transform="translate(0,4.5) scale(0.78)"><path d="M4.1 1.3 L8.4 0.2 L12.8 1.6 V6.3 L17.2 8.4 V14.4 L11.8 17.6 L0.4 10 V5.6 L3.2 4.7 Z" fill="#ececec" stroke="#c4c4c4" stroke-width="1" stroke-linejoin="round"/><path d="M4.1 1.3 L8.4 0.2 L12.8 1.6 L8.6 3.2 Z M8.6 8 L12.8 6.3 L17.2 8.4 L12.3 10.6 Z" fill="#f8f8f8"/><path d="M8.6 3.2 L12.8 1.6 V6.3 L8.6 8 Z M12.3 10.6 L17.2 8.4 V14.4 L11.8 17.6 Z" fill="#f2f2f2"/><path d="M4.1 1.3 L8.6 3.2 L12.8 1.6 M8.6 3.2 V8 L12.8 6.3 M8.6 8 L12.3 10.6 L17.2 8.4 M12.3 10.6 L11.8 17.6 M3.2 4.7 L4.1 1.3" fill="none" stroke="#c4c4c4" stroke-width="0.7"/></g><path d="M12 1.5 L15 0.5 L18 1.5 V4.5 L15 5.5 L12 4.5 Z" fill="#f0f0f0" stroke="#c8c8c8" stroke-width="0.7"/><path d="M15 6 V9 M13 7 L10 10" fill="none" stroke="#c8c8c8" stroke-width="1" stroke-dasharray="2 1.2"/></svg>
<span class="t " style="left:279.00px;top:488.14px;font-size:12px;line-height:16px;letter-spacing:-0.149px;color:#000;">Model Break View...</span>
<svg class="b" style="left:253px;top:487px;" width="18" height="18" viewBox="0 0 18 18"><path d="M2 1.5 H7 V7.5 L5 10 H7 V16.5 H2 Z M11.5 1.5 H17 V16.5 H11.5 V10 L13.5 7.5 H11.5 Z" fill="url(#gw)" stroke="#222" stroke-width="0.9" stroke-linejoin="round"/><path d="M5 10 L8.5 10 L10 7.5 L13.5 7.5" fill="none" stroke="#222" stroke-width="1"/></svg>
<span class="t " style="left:279.00px;top:512.14px;font-size:12px;line-height:16px;letter-spacing:-0.287px;color:#000;">Part...</span>
<svg class="b" style="left:253px;top:511px;" width="18" height="18" viewBox="0 0 18 18"><g transform="translate(7.5,0) scale(0.72)"><path d="M4.1 1.3 L8.4 0.2 L12.8 1.6 V6.3 L17.2 8.4 V14.4 L11.8 17.6 L0.4 10 V5.6 L3.2 4.7 Z" fill="#f1c31a" stroke="#7d5e08" stroke-width="1" stroke-linejoin="round"/><path d="M4.1 1.3 L8.4 0.2 L12.8 1.6 L8.6 3.2 Z M8.6 8 L12.8 6.3 L17.2 8.4 L12.3 10.6 Z" fill="#fde670"/><path d="M8.6 3.2 L12.8 1.6 V6.3 L8.6 8 Z M12.3 10.6 L17.2 8.4 V14.4 L11.8 17.6 Z" fill="#f9dc48"/><path d="M4.1 1.3 L8.6 3.2 L12.8 1.6 M8.6 3.2 V8 L12.8 6.3 M8.6 8 L12.3 10.6 L17.2 8.4 M12.3 10.6 L11.8 17.6 M3.2 4.7 L4.1 1.3" fill="none" stroke="#7d5e08" stroke-width="0.7"/></g><path d="M1 9 H5 L6 10.5 H10 V12 H3 L1 17.5 Z" fill="#ededed" stroke="#222" stroke-width="0.9"/><path d="M3 12 H12.5 L10 17.5 H1 Z" fill="url(#gw)" stroke="#222" stroke-width="0.9" stroke-linejoin="round"/><path d="M2 9.5 Q1.5 5 5 4" fill="none" stroke="#2d8a1e" stroke-width="1.6"/><path d="M3 2 L7.5 3.2 L4.5 6.5 Z" fill="#2d8a1e"/></svg>
<span class="t " style="left:279.00px;top:536.14px;font-size:12px;line-height:16px;letter-spacing:-0.048px;color:#ababab;">Mirror Part...</span>

<div class="b" style="left:279px;top:560px;width:172px;height:1px;background:#c9c9c9;"></div>
<span class="t " style="left:279.00px;top:570.14px;font-size:12px;line-height:16px;letter-spacing:-0.281px;color:#000;">Sketch</span>
<svg class="b" style="left:253px;top:569px;" width="18" height="18" viewBox="0 0 18 18"><path d="M4 3 V16 M8 3 V16 M12 3 V16 M16 3 V16 M2 5 H17 M2 9 H17 M2 13 H17" stroke="#dedede" stroke-width="0.8" fill="none"/><path d="M14 1.5 H1.5 V11 Q1.5 16 6.5 16 H17.5" fill="none" stroke="#1b5a80" stroke-width="1.8"/></svg>
<span class="t " style="left:279.00px;top:594.14px;font-size:12px;line-height:16px;letter-spacing:-0.373px;color:#000;">3D Sketch</span>
<svg class="b" style="left:253px;top:593px;" width="18" height="18" viewBox="0 0 18 18"><path d="M14 1.5 H1.5 V11 Q1.5 16 6.5 16 H17.5" fill="none" stroke="#1b5a80" stroke-width="1.8"/><text x="3.6" y="13.2" font-size="10" font-weight="bold" fill="#111" letter-spacing="-0.6">3D</text></svg>
<span class="t " style="left:279.00px;top:618.14px;font-size:12px;line-height:16px;letter-spacing:-0.318px;color:#ababab;">3D Sketch On Plane</span>
<svg class="b" style="left:253px;top:617px;" width="18" height="18" viewBox="0 0 18 18"><path d="M1 4 L13 1 V12 L1 15 Z" fill="#f3f3f3" stroke="#c6c6c6" stroke-width="0.9"/><path d="M10 4 H4.5 V9 Q4.5 11.5 7 11.5 H11" fill="none" stroke="#c6c6c6" stroke-width="1.5"/><text x="8.5" y="17.5" font-size="7.5" fill="#bdbdbd" letter-spacing="-0.4">3D</text></svg>
<span class="t " style="left:279.00px;top:642.14px;font-size:12px;line-height:16px;letter-spacing:-0.241px;color:#ababab;">Derived Sketch</span>

<span class="t " style="left:279.00px;top:666.14px;font-size:12px;line-height:16px;letter-spacing:-0.177px;color:#ababab;">Sketch From Drawing</span>

<span class="t " style="left:279.00px;top:690.14px;font-size:12px;line-height:16px;letter-spacing:-0.135px;color:#000;">Slicing...</span>
<svg class="b" style="left:253px;top:689px;" width="18" height="18" viewBox="0 0 18 18"><path d="M2 4 L9 1 L16 3.5 V13 L9 17 L2 13.5 Z" fill="url(#gw)" stroke="#222" stroke-width="0.9" stroke-linejoin="round"/><path d="M2 4 L9 7 L16 3.5 M9 7 V17" fill="none" stroke="#222" stroke-width="0.8"/><path d="M0.5 6.5 L9 10 L17.5 6.5 M0.5 9.5 L9 13 L17.5 9.5" fill="none" stroke="#1b5a80" stroke-width="1.1"/><path d="M2 7.2 L9 10 L16 7.2 V9 L9 12 L2 9.2Z" fill="#8fc6e0" opacity="0.8"/></svg>
<span class="t " style="left:279.00px;top:714.14px;font-size:12px;line-height:16px;letter-spacing:-0.466px;color:#000;">DXF/DWG...</span>

<span class="t " style="left:279.00px;top:738.14px;font-size:12px;line-height:16px;letter-spacing:-0.198px;color:#000;">Design Study</span>
<svg class="b" style="left:436px;top:740px;" width="8" height="10" viewBox="0 0 8 10"><path d="M1.6 1.5 L5.9 5 L1.6 8.5 Z" fill="#3c3c3c"/></svg>

<div class="b" style="left:279px;top:763px;width:172px;height:1px;background:#c9c9c9;"></div>
<span class="t " style="left:279.00px;top:772.14px;font-size:12px;line-height:16px;letter-spacing:-0.281px;color:#000;">Tables</span>
<svg class="b" style="left:436px;top:774px;" width="8" height="10" viewBox="0 0 8 10"><path d="M1.6 1.5 L5.9 5 L1.6 8.5 Z" fill="#3c3c3c"/></svg>

<span class="t " style="left:279.00px;top:796.14px;font-size:12px;line-height:16px;letter-spacing:0.147px;color:#000;">Annotations</span>
<svg class="b" style="left:436px;top:798px;" width="8" height="10" viewBox="0 0 8 10"><path d="M1.6 1.5 L5.9 5 L1.6 8.5 Z" fill="#3c3c3c"/></svg>

<div class="b" style="left:279px;top:821px;width:172px;height:1px;background:#c9c9c9;"></div>
<span class="t " style="left:279.00px;top:830.14px;font-size:12px;line-height:16px;letter-spacing:-0.076px;color:#000;">Object...</span>

<span class="t " style="left:279.00px;top:854.14px;font-size:12px;line-height:16px;letter-spacing:-0.001px;color:#000;">Hyperlink...</span>
<svg class="b" style="left:253px;top:853px;" width="18" height="18" viewBox="0 0 18 18"><circle cx="8" cy="8" r="7" fill="#9fd0ea" stroke="#1c4f78" stroke-width="1"/><path d="M4 3 Q7 5 6 8 Q4 9 2 8 M9 1.5 Q12 4 11 6 Q13 8 14.5 6 M5 12 Q8 10 10 13" fill="#e8f4e0" stroke="#4d7f5a" stroke-width="0.7"/><path d="M9 14 Q9 11.5 11.5 11.5 H13 M17 14 Q17 16.5 14.5 16.5 H13 M11.5 16.5 Q9 16.5 9 14 M14.5 11.5 Q17 11.5 17 14" fill="none" stroke="#111" stroke-width="1.5"/><path d="M11.5 14 H14.5" stroke="#111" stroke-width="1.2"/></svg>
<div class="b" style="left:279px;top:879px;width:172px;height:1px;background:#c9c9c9;"></div>
<span class="t " style="left:279.00px;top:888.14px;font-size:12px;line-height:16px;letter-spacing:-0.145px;color:#000;">Customize Menu</span>

<div class="b" style="left:452px;top:201px;width:218px;height:628px;box-shadow:4px 4px 2.5px rgba(0,0,0,0.55);background:#888"></div>
<div class="b" style="left:449px;top:197px;width:224px;height:635px;background:#f7f7f7;border:1px solid #a3a3a3;box-sizing:border-box;box-shadow:inset 0 0 0 1px #fdfdfd;"></div>
<span class="t " style="left:483.00px;top:204.14px;font-size:12px;line-height:16px;letter-spacing:-0.236px;color:#000;">Extrude...</span>
<svg class="b" style="left:457px;top:203px;" width="18" height="18" viewBox="0 0 18 18"><path d="M0 9.5 Q2 6.5 7.5 5.5 Q9 5.2 9.5 6.5 L11 9 L17.5 9.5 Q14.5 11 14 13.5 L7.5 17.5 Q5.5 12.5 0 9.5 Z" fill="url(#gb)" stroke="#1b5a80" stroke-width="0.9" stroke-linejoin="round"/><path d="M7.5 5.5 Q8.5 9 13.5 13.5" fill="none" stroke="#1b5a80" stroke-width="0.6"/><path d="M10.5 0.5 L15.5 5.5" stroke="#111" stroke-width="2.2"/><path d="M18.2 8.2 L11.6 7.4 L17.4 1.6 Z" fill="#111"/></svg>
<span class="t " style="left:483.00px;top:228.14px;font-size:12px;line-height:16px;letter-spacing:-0.336px;color:#000;">Revolve...</span>
<svg class="b" style="left:457px;top:227px;" width="18" height="18" viewBox="0 0 18 18"><path d="M5 1.5 Q12 -1 16 4 Q19 10 13 15 Q7 18 3 13 L1 8 L4 11 Q8 14 12 10 Q14 6 10 4 Q7 3 6 5 Z" fill="url(#gb)" stroke="#1b5a80" stroke-width="0.9" stroke-linejoin="round"/><path d="M3 6 L13 12" stroke="#111" stroke-width="0.8"/></svg>
<span class="t " style="left:483.00px;top:252.14px;font-size:12px;line-height:16px;letter-spacing:-0.462px;color:#000;">Sweep...</span>
<svg class="b" style="left:457px;top:251px;" width="18" height="18" viewBox="0 0 18 18"><path d="M1 11 Q3 12 5 10 Q7 7 8 4 Q10 0 14 1 L17 3 Q15 6 12 5 Q11 9 9 13 Q6 18 2 15 Z" fill="url(#gb)" stroke="#1b5a80" stroke-width="0.9" stroke-linejoin="round"/></svg>
<span class="t " style="left:483.00px;top:276.14px;font-size:12px;line-height:16px;letter-spacing:-0.002px;color:#000;">Loft...</span>
<svg class="b" style="left:457px;top:275px;" width="18" height="18" viewBox="0 0 18 18"><path d="M5.3 0.8 H14.6 Q14 5.5 15 7.5 L18 10 L10 17.3 L2.3 10.5 Q6 7.5 5.3 0.8 Z" fill="url(#gb)" stroke="#1b5a80" stroke-width="0.9" stroke-linejoin="round"/><path d="M2.3 10.5 L10 12.5 L18 10" fill="none" stroke="#1b5a80" stroke-width="0.7"/></svg>
<span class="t " style="left:483.00px;top:300.14px;font-size:12px;line-height:16px;letter-spacing:-0.214px;color:#000;">Boundary Surface...</span>
<svg class="b" style="left:457px;top:299px;" width="18" height="18" viewBox="0 0 18 18"><path d="M0.5 8 Q4 4 6 5 Q9 2 12 1 L17.5 7 Q14 9 12 10 Q9 12 7 15.5 Z" fill="url(#gb)" stroke="#1b5a80" stroke-width="0.9" stroke-linejoin="round"/><path d="M6 5 L12.5 11 M3.5 6 L10 13" fill="none" stroke="#1b5a80" stroke-width="0.8"/></svg>
<span class="t " style="left:483.00px;top:324.14px;font-size:12px;line-height:16px;letter-spacing:-0.225px;color:#000;">Planar...</span>
<svg class="b" style="left:457px;top:323px;" width="18" height="18" viewBox="0 0 18 18"><path d="M1 4.5 L17 0.5 V13 L1 17.5 Z" fill="url(#gb)" stroke="#1b5a80" stroke-width="0.9" stroke-linejoin="round"/></svg>
<div class="b" style="left:483px;top:348px;width:187px;height:1px;background:#c9c9c9;"></div>
<span class="t " style="left:483.00px;top:358.14px;font-size:12px;line-height:16px;letter-spacing:-0.169px;color:#000;">Flatten...</span>
<svg class="b" style="left:457px;top:357px;" width="18" height="18" viewBox="0 0 18 18"><path d="M2 14 L10 12 L17 14.5 L8 17.5 Z" fill="url(#gw)" stroke="#222" stroke-width="0.9" stroke-linejoin="round"/><path d="M1 2 Q5 3 9 1 L17 4 Q13 5 10 8 Z" fill="url(#gb)" stroke="#1b5a80" stroke-width="0.9" stroke-linejoin="round"/><path d="M4 6 V12 M12 8 V14" stroke="#111" stroke-width="1.3"/><path d="M1.5 10 H6.5 L4 13.5 Z M9.5 12 H14.5 L12 15.5 Z" fill="#111"/></svg>
<span class="t " style="left:483.00px;top:382.14px;font-size:12px;line-height:16px;letter-spacing:-0.002px;color:#000;">Fillet/Round...</span>
<svg class="b" style="left:457px;top:381px;" width="18" height="18" viewBox="0 0 18 18"><path d="M1 5 L7 1.5 L17 4 V13 L9 17 L1 14 Z" fill="url(#gw)" stroke="#222" stroke-width="0.9" stroke-linejoin="round"/><path d="M7 1.5 Q13 0 17 4 L17 7 L9 10 Q9 5 7 1.5 Z" fill="url(#gb)" stroke="#1b5a80" stroke-width="0.9" stroke-linejoin="round"/><path d="M9 10 V17 M1 5 Q6 4 9 10" fill="none" stroke="#222" stroke-width="0.9"/></svg>
<span class="t " style="left:483.00px;top:406.14px;font-size:12px;line-height:16px;letter-spacing:-0.235px;color:#000;">Chamfer...</span>
<svg class="b" style="left:457px;top:405px;" width="18" height="18" viewBox="0 0 18 18"><path d="M2 8 L8 1 L17 3.5 V13 L8 17 L2 14 Z" fill="url(#gw)" stroke="#222" stroke-width="0.9" stroke-linejoin="round"/><path d="M2 8 L8 1 L12 3 L6.5 10.5 Z" fill="url(#gb)" stroke="#1b5a80" stroke-width="0.9" stroke-linejoin="round"/><path d="M6.5 10.5 V16.5 M6.5 10.5 L12 3 L17 3.5" fill="none" stroke="#222" stroke-width="0.9"/></svg>
<span class="t " style="left:483.00px;top:430.14px;font-size:12px;line-height:16px;letter-spacing:-0.088px;color:#000;">Offset...</span>
<svg class="b" style="left:457px;top:429px;" width="18" height="18" viewBox="0 0 18 18"><path d="M3 10 L9 7 Q14 7 17 11 V14 L7 17.5 L3 14.5 Z" fill="url(#gw)" stroke="#222" stroke-width="0.9" stroke-linejoin="round"/><path d="M7 13.5 Q9 9 17 11 M7 13.5 V17.5 M3 10 L7 13.5" fill="none" stroke="#222" stroke-width="0.9"/><path d="M0.5 5 Q8 -1 17.5 6 Q12 3 10 6 L5 9 Z" fill="url(#gb)" stroke="#1b5a80" stroke-width="0.9" stroke-linejoin="round"/></svg>
<span class="t " style="left:483.00px;top:454.14px;font-size:12px;line-height:16px;letter-spacing:-0.336px;color:#000;">Radiate...</span>
<svg class="b" style="left:457px;top:453px;" width="18" height="18" viewBox="0 0 18 18"><ellipse cx="9" cy="9" rx="6" ry="8.5" fill="url(#gw)" stroke="#222" stroke-width="0.9" stroke-linejoin="round"/><path d="M1 8 Q9 4 17 8 Q17 11 9 12.5 Q1 11 1 8 Z" fill="url(#gb)" stroke="#1b5a80" stroke-width="0.9" stroke-linejoin="round"/><path d="M3.5 8 Q9 11 14.5 8 Q13 4 9 1 Q5 4 3.5 8Z" fill="url(#gw)" stroke="none"/><path d="M3.2 8.2 Q9 11.5 14.8 8.2" fill="none" stroke="#1b5a80" stroke-width="0.9"/><path d="M3.5 7 Q3.5 0.5 9 0.5 Q14.5 0.5 14.5 7" fill="none" stroke="#222" stroke-width="0.9"/></svg>
<span class="t " style="left:483.00px;top:478.14px;font-size:12px;line-height:16px;letter-spacing:-0.315px;color:#000;">Ruled Surface...</span>
<svg class="b" style="left:457px;top:477px;" width="18" height="18" viewBox="0 0 18 18"><path d="M1 10 Q10 9 10 1 H17 Q17 16 1 17.5 Z" fill="url(#gw)" stroke="#222" stroke-width="0.9" stroke-linejoin="round"/><path d="M4 10 L6 17 M8 8 L12 15 M10 4 L16.5 8" stroke="#4a8fb6" stroke-width="1.3"/></svg>
<span class="t " style="left:483.00px;top:502.14px;font-size:12px;line-height:16px;letter-spacing:-0.190px;color:#000;">Fill...</span>
<svg class="b" style="left:457px;top:501px;" width="18" height="18" viewBox="0 0 18 18"><path d="M1 8 Q6 6 11 1 L17.5 6.5 Q12 11 7 16 Z" fill="url(#gw)" stroke="#222" stroke-width="0.9" stroke-linejoin="round"/><path d="M5 8 Q8 7 11 4.5 L14 7 Q11 10 8 12.5 Z" fill="#4a8fb6" stroke="#1b5a80" stroke-width="0.7"/></svg>
<span class="t " style="left:483.00px;top:526.14px;font-size:12px;line-height:16px;letter-spacing:-0.243px;color:#000;">Freeform...</span>
<svg class="b" style="left:457px;top:525px;" width="18" height="18" viewBox="0 0 18 18"><ellipse cx="9.5" cy="13" rx="7" ry="4" fill="url(#gw)" stroke="#222" stroke-width="0.9" stroke-linejoin="round"/><path d="M3 12 Q6 5 9 5 Q12 5 16 12 Q9 15 3 12 Z" fill="url(#gb)" stroke="#1b5a80" stroke-width="0.9" stroke-linejoin="round"/><path d="M8 1 V8" stroke="#111" stroke-width="1.6"/><path d="M8 -1 L11 3 H5 Z" fill="#111"/></svg>
<div class="b" style="left:452px;top:546px;width:218px;height:24px;background:#fff;border:1px solid #b9b9b9;box-sizing:border-box;"></div>
<span class="t " style="left:483.00px;top:550.14px;font-size:12px;line-height:16px;letter-spacing:-0.145px;color:#000;">Mid Surface...</span>
<svg class="b" style="left:457px;top:549px;" width="18" height="18" viewBox="0 0 18 18"><path d="M5 2 L13 1 L13 9 L5 11 Z" fill="#4a8fb6" stroke="#1b5a80" stroke-width="0.8"/><path d="M1 3 L8 5 V17 L1 13 Z" fill="none" stroke="#222" stroke-width="1"/><path d="M8 5 L17 3.5 V13.5 L8 17 Z" fill="url(#gw)" stroke="#222" stroke-width="0.9" stroke-linejoin="round"/><path d="M1 3 L10 1 L17 3.5 M10 1 V4.5" fill="none" stroke="#222" stroke-width="1"/><path d="M2.5 5 L7 6.5 V13 L2.5 11 Z" fill="#4a8fb6" opacity="0.9"/></svg>
<span class="t " style="left:483.00px;top:574.14px;font-size:12px;line-height:16px;letter-spacing:-0.206px;color:#000;">Parting Surface...</span>
<svg class="b" style="left:457px;top:573px;" width="18" height="18" viewBox="0 0 18 18"><path d="M5 1 Q9 -1 13 1 V14 Q9 18 5 14 Z" fill="url(#gw)" stroke="#777" stroke-width="0.8"/><path d="M0 8 L9 5.5 L18 8.5 L9 12.5 Z" fill="url(#gb)" stroke="#1b5a80" stroke-width="0.9" stroke-linejoin="round"/><path d="M6 8 Q9 6.5 12 8 V14.5 Q9 17 6 14.5 Z" fill="url(#gw)" stroke="#777" stroke-width="0.7"/></svg>
<span class="t " style="left:483.00px;top:598.14px;font-size:12px;line-height:16px;letter-spacing:-0.268px;color:#ababab;">Surface From Mesh...</span>
<svg class="b" style="left:457px;top:597px;" width="18" height="18" viewBox="0 0 18 18"><path d="M5 1 L11 2 Q10 6 13 8 Q17 9 16 13 Q14 17 9 16 Q6 12 2 12 Q6 8 5 1 Z" fill="url(#gg)" stroke="#c2c2c2" stroke-width="0.9" stroke-linejoin="round"/><path d="M2 17 L3 12 L7 15 Z" fill="#c4c4c4"/></svg>
<div class="b" style="left:483px;top:622px;width:187px;height:1px;background:#c9c9c9;"></div>
<span class="t " style="left:483.00px;top:632.14px;font-size:12px;line-height:16px;letter-spacing:-0.262px;color:#ababab;">Extend...</span>
<svg class="b" style="left:457px;top:631px;" width="18" height="18" viewBox="0 0 18 18"><path d="M0.5 8 Q4 3 7 5 Q10 6 11 1 L16.5 6 Q14 11 11 10 Q8 9 7 15.5 Z" fill="url(#gg)" stroke="#c2c2c2" stroke-width="0.9" stroke-linejoin="round"/><path d="M9 9 L15 15" stroke="#bdbdbd" stroke-width="1.8"/><path d="M16.5 16.5 L11.5 15.5 L15.5 11.5 Z" fill="#bdbdbd"/></svg>
<span class="t " style="left:483.00px;top:656.14px;font-size:12px;line-height:16px;letter-spacing:-0.221px;color:#ababab;">Trim...</span>
<svg class="b" style="left:457px;top:655px;" width="18" height="18" viewBox="0 0 18 18"><path d="M0.5 8 Q4 3 7 5 Q10 6 11 1 L16.5 6 Q14 11 11 10 Q8 9 7 15.5 Z" fill="url(#gg)" stroke="#c2c2c2" stroke-width="0.9" stroke-linejoin="round"/></svg>
<span class="t " style="left:483.00px;top:680.14px;font-size:12px;line-height:16px;letter-spacing:-0.037px;color:#ababab;">Untrim...</span>
<svg class="b" style="left:457px;top:679px;" width="18" height="18" viewBox="0 0 18 18"><path d="M0.5 8 Q4 3 7 5 Q10 6 11 1 L16.5 6 Q14 11 11 10 Q8 9 7 15.5 Z" fill="url(#gg)" stroke="#c2c2c2" stroke-width="0.9" stroke-linejoin="round"/><path d="M9 4 L14 8 L10 11 Z" fill="#e8e8e8" stroke="#c8c8c8" stroke-width="0.6"/></svg>
<span class="t " style="left:483.00px;top:704.14px;font-size:12px;line-height:16px;letter-spacing:-0.155px;color:#ababab;">Delete Hole</span>
<svg class="b" style="left:457px;top:703px;" width="18" height="18" viewBox="0 0 18 18"><path d="M0.5 8 Q4 3 7 5 Q10 6 11 1 L16.5 6 Q14 11 11 10 Q8 9 7 15.5 Z" fill="url(#gg)" stroke="#c2c2c2" stroke-width="0.9" stroke-linejoin="round"/><circle cx="8" cy="7" r="2.3" fill="#f4f4f4" stroke="#c2c2c2" stroke-width="0.8"/><path d="M10 11 L16 17 M16 11 L10 17" stroke="#bdbdbd" stroke-width="2"/></svg>
<span class="t " style="left:483.00px;top:728.14px;font-size:12px;line-height:16px;letter-spacing:-0.097px;color:#000;">Knit...</span>
<svg class="b" style="left:457px;top:727px;" width="18" height="18" viewBox="0 0 18 18"><path d="M0.5 2 Q4 0 8 3 L9 3 V16 H2.5 V7 Q2 4 0.5 2 Z M16.5 2 Q13 0 9.5 3 L9 3 V16 H15 V7 Q15.5 4 16.5 2 Z" fill="url(#gw)" stroke="#222" stroke-width="0.9" stroke-linejoin="round"/><path d="M7.5 2 L10.5 4.5 L7.5 7 L10.5 9.5 L7.5 12 L10.5 14.5 L8 16.5" fill="none" stroke="#4a8fb6" stroke-width="1.4"/></svg>
<span class="t " style="left:483.00px;top:752.14px;font-size:12px;line-height:16px;letter-spacing:0.100px;color:#000;">Move/Copy...</span>
<svg class="b" style="left:457px;top:751px;" width="18" height="18" viewBox="0 0 18 18"><path d="M1 5 L6 2 L11 4 L6 8 Z" fill="url(#gw)" stroke="#222" stroke-width="0.9" stroke-linejoin="round"/><path d="M7 12 L12 8 L17 11 L12 16 Z" fill="url(#gb)" stroke="#1b5a80" stroke-width="0.9" stroke-linejoin="round"/><path d="M10 1 Q16 1 15 7" fill="none" stroke="#111" stroke-width="1.4"/><path d="M12.5 6 L17.5 5.5 L15 9.5 Z" fill="#111"/><path d="M1 10 L5 14" stroke="#111" stroke-width="1.8"/><path d="M6.5 15.5 L1.5 15 L5.5 11 Z" fill="#111"/></svg>
<span class="t " style="left:483.00px;top:776.14px;font-size:12px;line-height:16px;letter-spacing:-0.080px;color:#000;">Convert to Mesh Body...</span>
<svg class="b" style="left:457px;top:775px;" width="18" height="18" viewBox="0 0 18 18"><path d="M0.5 3 L5 1 L9 3 V9 L5 11 L0.5 9 Z" fill="url(#gb)" stroke="#1b5a80" stroke-width="0.9" stroke-linejoin="round"/><path d="M0.5 3 L5 5 L9 3 M5 5 V11" fill="none" stroke="#1b5a80" stroke-width="0.7"/><path d="M8.5 13 L13 9 L17 12 V16.5 H9.5 Z" fill="url(#gw)" stroke="#222" stroke-width="0.9" stroke-linejoin="round"/><path d="M8.5 13 L17 16.5 M13 9 V16.5 M17 12 L9.5 16.5" fill="none" stroke="#222" stroke-width="0.6"/><path d="M5.5 6.5 L10 11" stroke="#111" stroke-width="1.6"/><path d="M11.5 12.5 L6.8 11.8 L10.8 7.8 Z" fill="#111"/></svg>
<div class="b" style="left:483px;top:800px;width:187px;height:1px;background:#c9c9c9;"></div>
<span class="t " style="left:483.00px;top:810.14px;font-size:12px;line-height:16px;letter-spacing:-0.145px;color:#000;">Customize Menu</span>

<svg class="b" style="left:0;top:0" width="1575" height="1281" viewBox="0 0 1575 1281" fill="none" stroke="#21a045" stroke-width="2.9" stroke-linejoin="round"><path d="M245 2.6 H291 Q300.4 2.8 300.6 12 V33 Q300.4 42.2 291 42.6 H246 Q236.2 42.4 236 33 V12 Q236.2 3 245 2.6 Z"/><path stroke-width="3.2" d="M249 193.6 C300 191.6 400 191.2 452 191.8 L459 193 Q465.2 194.4 465.4 201 V218 Q464.8 227.6 455 228.4 L300 229 L250 228.2 Q239.6 227.4 239.2 218 V204 Q239.6 194.4 249 193.6 Z"/><path stroke-width="3.3" d="M450 539.4 C500 536.2 600 535.6 669 536.6 Q682.2 537.6 683 546 L683.6 565 Q683 575.4 670 576.6 L560 577.8 L458 576.6 Q443.2 575.4 442.4 568 L441.8 548 Q442.2 541 450 539.4 Z"/></svg>
</body></html>
